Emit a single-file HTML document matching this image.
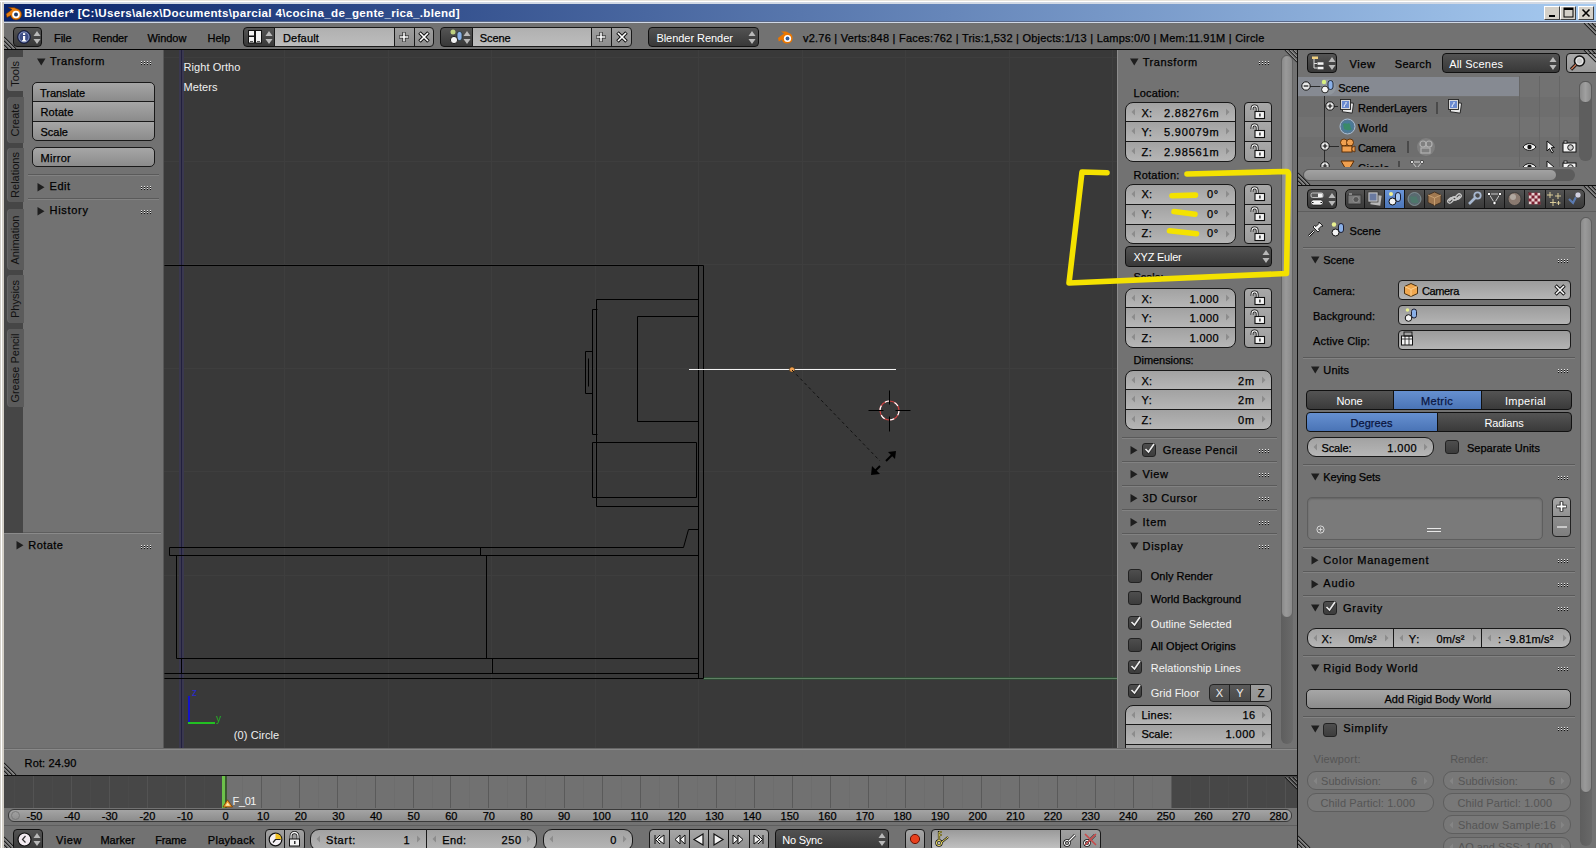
<!DOCTYPE html><html><head><meta charset="utf-8"><style>
html,body{margin:0;padding:0;}
body{width:1596px;height:848px;overflow:hidden;position:relative;background:#727272;font-family:"Liberation Sans",sans-serif;}
.a{position:absolute;box-sizing:border-box;}
.t{white-space:nowrap;}
.d{-webkit-text-stroke:0.25px currentColor;}
</style></head><body>

<div class="a " style="left:0px;top:0px;width:1596px;height:848px;background:#d4d0c8;"></div>
<div class="a " style="left:0px;top:0px;width:1596px;height:1px;background:#e8e4dc;"></div>
<div class="a " style="left:0px;top:1px;width:1596px;height:1px;background:#ffffff;"></div>
<div class="a " style="left:1px;top:1px;width:1px;height:847px;background:#ffffff;"></div>
<div class="a " style="left:4px;top:2px;width:1592px;height:2px;background:#d2d9e4;"></div>
<div class="a " style="left:4px;top:4px;width:1592px;height:18px;background:linear-gradient(to right,#0a246a 0%,#a6caf0 100%);"></div>
<div class="a t" style="left:24.00px;top:7.18px;font-size:11.6px;line-height:11.6px;color:#fff;letter-spacing:0.309px;font-weight:bold;">Blender* [C:\Users\alex\Documents\parcial 4\cocina_de_gente_rica_.blend]</div>
<svg class="a" style="left:5px;top:4px;" width="18" height="17" viewBox="0 0 18 17"><path d="M1 10 L7 5.5 L3.5 3.5 L9 3.5 L12 4.8 C15.5 5.8 17 9 16.5 11.5 C16 14.5 13 16.3 10 15.8 C7.2 15.3 5.8 13.2 5.8 11.5 L2 13.5 Z" fill="#e87d0d" stroke="#6a3000" stroke-width="0.6"/><circle cx="11" cy="10.5" r="3.8" fill="#fff"/><circle cx="11" cy="10.5" r="2" fill="#1f3c6a"/></svg>
<div class="a " style="left:1544px;top:6px;width:16px;height:14px;background:#d4d0c8;border-top:1px solid #fff;border-left:1px solid #fff;border-right:1px solid #404040;border-bottom:1px solid #404040;"></div>
<div class="a " style="left:1560px;top:6px;width:16px;height:14px;background:#d4d0c8;border-top:1px solid #fff;border-left:1px solid #fff;border-right:1px solid #404040;border-bottom:1px solid #404040;"></div>
<div class="a " style="left:1578px;top:6px;width:16px;height:14px;background:#d4d0c8;border-top:1px solid #fff;border-left:1px solid #fff;border-right:1px solid #404040;border-bottom:1px solid #404040;"></div>
<svg class="a" style="left:1544px;top:6px;" width="52" height="14" viewBox="0 0 52 14"><rect x="5" y="9" width="6" height="2" fill="#000"/><rect x="20" y="2" width="9" height="9" fill="none" stroke="#000" stroke-width="1"/><rect x="20" y="2" width="9" height="2" fill="#000"/><path d="M38.5 3.5 L45.5 10.5 M45.5 3.5 L38.5 10.5" stroke="#000" stroke-width="1.6"/></svg>
<div class="a " style="left:4px;top:22px;width:1592px;height:826px;background:#727272;"></div>
<div class="a " style="left:4px;top:21px;width:1592px;height:1px;background:#5a6a8c;"></div>
<div class="a " style="left:4px;top:22px;width:1592px;height:1px;background:#d0d8e6;"></div>
<div class="a " style="left:4px;top:23px;width:1592px;height:26px;background:#727272;"></div>
<div class="a " style="left:4px;top:49px;width:1592px;height:1px;background:#000;"></div>
<div class="a " style="left:13px;top:27px;width:29px;height:20px;background:linear-gradient(#545454,#383838);border:1px solid #111;border-radius:4px 4px 4px 4px;"></div>
<svg class="a" style="left:17px;top:30px;" width="14" height="14" viewBox="0 0 14 14"><circle cx="7" cy="7" r="6.3" fill="#3d4e86" stroke="#0d1330" stroke-width="1"/><circle cx="7" cy="7" r="5" fill="none" stroke="#9aa6cf" stroke-width="0.8"/><rect x="6" y="6" width="2.2" height="5" fill="#fff"/><rect x="5" y="10.2" width="4.2" height="1.2" fill="#fff"/><rect x="6" y="3.2" width="2.2" height="1.8" fill="#fff"/></svg>
<svg class="a" style="left:33px;top:30px;" width="8" height="15" viewBox="0 0 8 15"><path d="M4 1 L7.5 6 L0.5 6Z" fill="#b9b9b9"/><path d="M4 14 L7.5 9 L0.5 9Z" fill="#b9b9b9"/></svg>
<div class="a t d" style="left:54.00px;top:32.69px;font-size:11px;line-height:11px;color:#000;letter-spacing:-0.030px;">File</div>
<div class="a t d" style="left:92.50px;top:32.69px;font-size:11px;line-height:11px;color:#000;letter-spacing:-0.182px;">Render</div>
<div class="a t d" style="left:147.40px;top:32.69px;font-size:11px;line-height:11px;color:#000;letter-spacing:-0.021px;">Window</div>
<div class="a t d" style="left:207.50px;top:32.69px;font-size:11px;line-height:11px;color:#000;letter-spacing:-0.031px;">Help</div>
<div class="a " style="left:243px;top:27px;width:32px;height:20px;background:linear-gradient(#545454,#383838);border:1px solid #111;border-radius:4px 0px 0px 4px;"></div>
<svg class="a" style="left:248px;top:30px;" width="14" height="14" viewBox="0 0 14 14"><rect x="0.5" y="0.5" width="6" height="5.5" fill="#f0f0f0" stroke="#111"/><rect x="0.5" y="6.5" width="6" height="6.5" fill="#f0f0f0" stroke="#111"/><rect x="7.5" y="0.5" width="6" height="12.5" fill="#f0f0f0" stroke="#111"/><rect x="2" y="11" width="3" height="1" fill="#555"/><rect x="9" y="11" width="3" height="1" fill="#555"/></svg>
<svg class="a" style="left:265px;top:30px;" width="8" height="15" viewBox="0 0 8 15"><path d="M4 1 L7.5 6 L0.5 6Z" fill="#b9b9b9"/><path d="M4 14 L7.5 9 L0.5 9Z" fill="#b9b9b9"/></svg>
<div class="a " style="left:274px;top:27px;width:121px;height:20px;background:linear-gradient(#b0b0b0,#bdbdbd);border:1px solid #191919;border-radius:0px 0px 0px 0px;"></div>
<div class="a t d" style="left:283.00px;top:32.69px;font-size:11px;line-height:11px;color:#000;letter-spacing:0.161px;">Default</div>
<div class="a " style="left:394px;top:27px;width:21px;height:20px;background:linear-gradient(#9e9e9e,#8e8e8e);border:1px solid #191919;border-radius:0px 0px 0px 0px;"></div>
<div class="a " style="left:414px;top:27px;width:20px;height:20px;background:linear-gradient(#9e9e9e,#8e8e8e);border:1px solid #191919;border-radius:0px 4px 4px 0px;"></div>
<svg class="a" style="left:397.0px;top:30px;" width="14" height="14" viewBox="0 0 14 14"><path d="M7 2 V12 M2 7 H12" stroke="#222" stroke-width="3.2"/><path d="M7 2.6 V11.4 M2.6 7 H11.4" stroke="#fff" stroke-width="1.6"/></svg>
<svg class="a" style="left:417.0px;top:30px;" width="14" height="14" viewBox="0 0 14 14"><path d="M2.5 2.5 L11.5 11.5 M11.5 2.5 L2.5 11.5" stroke="#111" stroke-width="3.6"/><path d="M3 3 L11 11 M11 3 L3 11" stroke="#fff" stroke-width="1.7"/></svg>
<div class="a " style="left:440px;top:27px;width:33px;height:20px;background:linear-gradient(#545454,#383838);border:1px solid #111;border-radius:4px 0px 0px 4px;"></div>
<svg class="a" style="left:448px;top:29px;" width="18" height="16" viewBox="0 0 18 16"><circle cx="5" cy="3" r="2.5" fill="#d9f08c" opacity="0.8"/><rect x="9" y="2.5" width="5" height="9" rx="2.5" fill="#8ab0e8" stroke="#233" stroke-width="0.8"/><circle cx="6" cy="11" r="3.6" fill="#f2f2f2" stroke="#111" stroke-width="0.9"/></svg>
<svg class="a" style="left:463px;top:30px;" width="8" height="15" viewBox="0 0 8 15"><path d="M4 1 L7.5 6 L0.5 6Z" fill="#b9b9b9"/><path d="M4 14 L7.5 9 L0.5 9Z" fill="#b9b9b9"/></svg>
<div class="a " style="left:472px;top:27px;width:120px;height:20px;background:linear-gradient(#b0b0b0,#bdbdbd);border:1px solid #191919;border-radius:0px 0px 0px 0px;"></div>
<div class="a t d" style="left:479.70px;top:32.69px;font-size:11px;line-height:11px;color:#000;letter-spacing:-0.044px;">Scene</div>
<div class="a " style="left:591px;top:27px;width:21px;height:20px;background:linear-gradient(#9e9e9e,#8e8e8e);border:1px solid #191919;border-radius:0px 0px 0px 0px;"></div>
<div class="a " style="left:611px;top:27px;width:21px;height:20px;background:linear-gradient(#9e9e9e,#8e8e8e);border:1px solid #191919;border-radius:0px 4px 4px 0px;"></div>
<svg class="a" style="left:594.0px;top:30px;" width="14" height="14" viewBox="0 0 14 14"><path d="M7 2 V12 M2 7 H12" stroke="#222" stroke-width="3.2"/><path d="M7 2.6 V11.4 M2.6 7 H11.4" stroke="#fff" stroke-width="1.6"/></svg>
<svg class="a" style="left:614.5px;top:30px;" width="14" height="14" viewBox="0 0 14 14"><path d="M2.5 2.5 L11.5 11.5 M11.5 2.5 L2.5 11.5" stroke="#111" stroke-width="3.6"/><path d="M3 3 L11 11 M11 3 L3 11" stroke="#fff" stroke-width="1.7"/></svg>
<div class="a " style="left:648px;top:27px;width:111px;height:20px;background:linear-gradient(#525252,#383838);border:1px solid #111;border-radius:4px 4px 4px 4px;"></div>
<div class="a t" style="left:656.40px;top:32.69px;font-size:11px;line-height:11px;color:#fff;letter-spacing:-0.042px;">Blender Render</div>
<svg class="a" style="left:748px;top:30px;" width="8" height="15" viewBox="0 0 8 15"><path d="M4 1 L7.5 6 L0.5 6Z" fill="#b9b9b9"/><path d="M4 14 L7.5 9 L0.5 9Z" fill="#b9b9b9"/></svg>
<svg class="a" style="left:777px;top:29px;" width="17" height="16" viewBox="0 0 17 16"><path d="M1 9 L7 4.5 L4 2.5 L9 2.5 L12 4 C15 5 16 8 15.5 10.5 C15 13.5 12 15 9 14.5 C6.5 14 5 12 5 10.5 L1.8 12.5 Z" fill="#ea7600"/><circle cx="10.5" cy="9.5" r="3.6" fill="#fff"/><circle cx="10.5" cy="9.5" r="1.9" fill="#2f5a9a"/></svg>
<div class="a t d" style="left:803.00px;top:32.69px;font-size:11px;line-height:11px;color:#000;letter-spacing:0.233px;">v2.76 | Verts:848 | Faces:762 | Tris:1,532 | Objects:1/13 | Lamps:0/0 | Mem:11.91M | Circle</div>
<svg class="a" style="left:1583px;top:23px;" width="13" height="13" viewBox="0 0 13 13"><path d="M1 0 L13 12 M5 0 L13 8 M9 0 L13 4" stroke="#1e1e1e" stroke-width="1.1"/><path d="M2.3 0 L13 10.7 M6.3 0 L13 6.7 M10.3 0 L13 2.7" stroke="#a8a8a8" stroke-width="0.8"/></svg>
<svg class="a" style="left:4px;top:36px;" width="13" height="13" viewBox="0 0 13 13"><path d="M0 1 L12 13 M0 5 L8 13 M0 9 L4 13" stroke="#1e1e1e" stroke-width="1.1"/><path d="M0 2.3 L10.7 13 M0 6.3 L6.7 13 M0 10.3 L2.7 13" stroke="#a8a8a8" stroke-width="0.8"/></svg>
<div class="a " style="left:4px;top:50px;width:19px;height:483px;background:#464646;"></div>
<div class="a " style="left:23px;top:50px;width:141px;height:483px;background:#727272;"></div>
<div class="a " style="left:4px;top:533px;width:160px;height:216px;background:#727272;"></div>
<div class="a " style="left:23px;top:532px;width:138px;height:1px;background:#5e5e5e;"></div>
<div class="a " style="left:4px;top:533px;width:157px;height:1px;background:#8a8a8a;"></div>
<div class="a " style="left:7px;top:57px;width:17px;height:34px;background:#727272;border-radius:4px 0 0 4px;box-shadow:inset 1px 0 0 rgba(255,255,255,0.08);"></div>
<div class="a t" style="left:10.2px;top:74.0px;font-size:11px;line-height:11px;color:#111;transform-origin:0 0;transform:rotate(-90deg) translate(-12.8px,0);">Tools</div>
<div class="a " style="left:7px;top:97px;width:17px;height:46px;background:#5b5b5b;border-radius:4px 0 0 4px;box-shadow:inset 1px 0 0 rgba(255,255,255,0.08);"></div>
<div class="a t" style="left:10.2px;top:120.0px;font-size:11px;line-height:11px;color:#111;transform-origin:0 0;transform:rotate(-90deg) translate(-16.5px,0);">Create</div>
<div class="a " style="left:7px;top:148px;width:17px;height:54px;background:#5b5b5b;border-radius:4px 0 0 4px;box-shadow:inset 1px 0 0 rgba(255,255,255,0.08);"></div>
<div class="a t" style="left:10.2px;top:175.0px;font-size:11px;line-height:11px;color:#111;transform-origin:0 0;transform:rotate(-90deg) translate(-22.9px,0);">Relations</div>
<div class="a " style="left:7px;top:209px;width:17px;height:61px;background:#5b5b5b;border-radius:4px 0 0 4px;box-shadow:inset 1px 0 0 rgba(255,255,255,0.08);"></div>
<div class="a t" style="left:10.2px;top:239.5px;font-size:11px;line-height:11px;color:#111;transform-origin:0 0;transform:rotate(-90deg) translate(-24.5px,0);">Animation</div>
<div class="a " style="left:7px;top:275px;width:17px;height:48px;background:#5b5b5b;border-radius:4px 0 0 4px;box-shadow:inset 1px 0 0 rgba(255,255,255,0.08);"></div>
<div class="a t" style="left:10.2px;top:299.0px;font-size:11px;line-height:11px;color:#111;transform-origin:0 0;transform:rotate(-90deg) translate(-19.0px,0);">Physics</div>
<div class="a " style="left:7px;top:329px;width:17px;height:78px;background:#5b5b5b;border-radius:4px 0 0 4px;box-shadow:inset 1px 0 0 rgba(255,255,255,0.08);"></div>
<div class="a t" style="left:10.2px;top:368.0px;font-size:11px;line-height:11px;color:#111;transform-origin:0 0;transform:rotate(-90deg) translate(-34.6px,0);">Grease Pencil</div>
<svg class="a" style="left:37px;top:58px;" width="9" height="8" viewBox="0 0 9 8"><path d="M0 0.5 L8.5 0.5 L4.25 7.5Z" fill="#1e1e1e"/></svg>
<div class="a t d" style="left:49.90px;top:55.69px;font-size:11px;line-height:11px;color:#000;letter-spacing:0.587px;">Transform</div>
<svg class="a" style="left:141px;top:61px;" width="11" height="4" viewBox="0 0 11 4"><rect x="0" y="0" width="1" height="1" fill="#e6e6e6"/><rect x="0" y="1" width="1" height="1" fill="#111"/><rect x="0" y="2" width="1" height="1" fill="#e6e6e6"/><rect x="0" y="3" width="1" height="1" fill="#111"/><rect x="3" y="0" width="1" height="1" fill="#e6e6e6"/><rect x="3" y="1" width="1" height="1" fill="#111"/><rect x="3" y="2" width="1" height="1" fill="#e6e6e6"/><rect x="3" y="3" width="1" height="1" fill="#111"/><rect x="6" y="0" width="1" height="1" fill="#e6e6e6"/><rect x="6" y="1" width="1" height="1" fill="#111"/><rect x="6" y="2" width="1" height="1" fill="#e6e6e6"/><rect x="6" y="3" width="1" height="1" fill="#111"/><rect x="9" y="0" width="1" height="1" fill="#e6e6e6"/><rect x="9" y="1" width="1" height="1" fill="#111"/><rect x="9" y="2" width="1" height="1" fill="#e6e6e6"/><rect x="9" y="3" width="1" height="1" fill="#111"/></svg>
<div class="a " style="left:32px;top:82px;width:123px;height:20px;background:linear-gradient(#a6a6a6,#8b8b8b);border:1px solid #191919;border-radius:5px 5px 0px 0px;"></div>
<div class="a " style="left:32px;top:101px;width:123px;height:21px;background:linear-gradient(#a6a6a6,#8b8b8b);border:1px solid #191919;border-radius:0px 0px 0px 0px;"></div>
<div class="a " style="left:32px;top:121px;width:123px;height:20px;background:linear-gradient(#a6a6a6,#8b8b8b);border:1px solid #191919;border-radius:0px 0px 5px 5px;"></div>
<div class="a t d" style="left:40.10px;top:87.69px;font-size:11px;line-height:11px;color:#000;letter-spacing:-0.052px;">Translate</div>
<div class="a t d" style="left:40.50px;top:106.69px;font-size:11px;line-height:11px;color:#000;letter-spacing:0.094px;">Rotate</div>
<div class="a t d" style="left:40.50px;top:126.69px;font-size:11px;line-height:11px;color:#000;letter-spacing:-0.006px;">Scale</div>
<div class="a " style="left:32px;top:147px;width:123px;height:20px;background:linear-gradient(#a6a6a6,#8b8b8b);border:1px solid #191919;border-radius:5px 5px 5px 5px;"></div>
<div class="a t d" style="left:40.50px;top:152.69px;font-size:11px;line-height:11px;color:#000;letter-spacing:0.302px;">Mirror</div>
<div class="a " style="left:28px;top:174px;width:131px;height:1px;background:#5a5a5a;"></div>
<div class="a " style="left:28px;top:175px;width:131px;height:1px;background:#828282;"></div>
<svg class="a" style="left:37px;top:183px;" width="8" height="9" viewBox="0 0 8 9"><path d="M0.5 0 L7.5 4.25 L0.5 8.5Z" fill="#1e1e1e"/></svg>
<div class="a t d" style="left:49.60px;top:180.69px;font-size:11px;line-height:11px;color:#000;letter-spacing:0.508px;">Edit</div>
<svg class="a" style="left:141px;top:186px;" width="11" height="4" viewBox="0 0 11 4"><rect x="0" y="0" width="1" height="1" fill="#e6e6e6"/><rect x="0" y="1" width="1" height="1" fill="#111"/><rect x="0" y="2" width="1" height="1" fill="#e6e6e6"/><rect x="0" y="3" width="1" height="1" fill="#111"/><rect x="3" y="0" width="1" height="1" fill="#e6e6e6"/><rect x="3" y="1" width="1" height="1" fill="#111"/><rect x="3" y="2" width="1" height="1" fill="#e6e6e6"/><rect x="3" y="3" width="1" height="1" fill="#111"/><rect x="6" y="0" width="1" height="1" fill="#e6e6e6"/><rect x="6" y="1" width="1" height="1" fill="#111"/><rect x="6" y="2" width="1" height="1" fill="#e6e6e6"/><rect x="6" y="3" width="1" height="1" fill="#111"/><rect x="9" y="0" width="1" height="1" fill="#e6e6e6"/><rect x="9" y="1" width="1" height="1" fill="#111"/><rect x="9" y="2" width="1" height="1" fill="#e6e6e6"/><rect x="9" y="3" width="1" height="1" fill="#111"/></svg>
<div class="a " style="left:28px;top:198px;width:131px;height:1px;background:#5a5a5a;"></div>
<div class="a " style="left:28px;top:199px;width:131px;height:1px;background:#828282;"></div>
<svg class="a" style="left:37px;top:207px;" width="8" height="9" viewBox="0 0 8 9"><path d="M0.5 0 L7.5 4.25 L0.5 8.5Z" fill="#1e1e1e"/></svg>
<div class="a t d" style="left:49.60px;top:204.69px;font-size:11px;line-height:11px;color:#000;letter-spacing:0.683px;">History</div>
<svg class="a" style="left:141px;top:210px;" width="11" height="4" viewBox="0 0 11 4"><rect x="0" y="0" width="1" height="1" fill="#e6e6e6"/><rect x="0" y="1" width="1" height="1" fill="#111"/><rect x="0" y="2" width="1" height="1" fill="#e6e6e6"/><rect x="0" y="3" width="1" height="1" fill="#111"/><rect x="3" y="0" width="1" height="1" fill="#e6e6e6"/><rect x="3" y="1" width="1" height="1" fill="#111"/><rect x="3" y="2" width="1" height="1" fill="#e6e6e6"/><rect x="3" y="3" width="1" height="1" fill="#111"/><rect x="6" y="0" width="1" height="1" fill="#e6e6e6"/><rect x="6" y="1" width="1" height="1" fill="#111"/><rect x="6" y="2" width="1" height="1" fill="#e6e6e6"/><rect x="6" y="3" width="1" height="1" fill="#111"/><rect x="9" y="0" width="1" height="1" fill="#e6e6e6"/><rect x="9" y="1" width="1" height="1" fill="#111"/><rect x="9" y="2" width="1" height="1" fill="#e6e6e6"/><rect x="9" y="3" width="1" height="1" fill="#111"/></svg>
<svg class="a" style="left:16px;top:541px;" width="8" height="9" viewBox="0 0 8 9"><path d="M0.5 0 L7.5 4.25 L0.5 8.5Z" fill="#1e1e1e"/></svg>
<div class="a t d" style="left:28.30px;top:539.69px;font-size:11px;line-height:11px;color:#000;letter-spacing:0.427px;">Rotate</div>
<svg class="a" style="left:141px;top:545px;" width="11" height="4" viewBox="0 0 11 4"><rect x="0" y="0" width="1" height="1" fill="#e6e6e6"/><rect x="0" y="1" width="1" height="1" fill="#111"/><rect x="0" y="2" width="1" height="1" fill="#e6e6e6"/><rect x="0" y="3" width="1" height="1" fill="#111"/><rect x="3" y="0" width="1" height="1" fill="#e6e6e6"/><rect x="3" y="1" width="1" height="1" fill="#111"/><rect x="3" y="2" width="1" height="1" fill="#e6e6e6"/><rect x="3" y="3" width="1" height="1" fill="#111"/><rect x="6" y="0" width="1" height="1" fill="#e6e6e6"/><rect x="6" y="1" width="1" height="1" fill="#111"/><rect x="6" y="2" width="1" height="1" fill="#e6e6e6"/><rect x="6" y="3" width="1" height="1" fill="#111"/><rect x="9" y="0" width="1" height="1" fill="#e6e6e6"/><rect x="9" y="1" width="1" height="1" fill="#111"/><rect x="9" y="2" width="1" height="1" fill="#e6e6e6"/><rect x="9" y="3" width="1" height="1" fill="#111"/></svg>
<div class="a " style="left:164px;top:50px;width:953px;height:699px;background:#393939;"></div>
<div class="a " style="left:163px;top:50px;width:1px;height:699px;background:#585858;"></div>
<svg class="a" style="left:164px;top:50px;" width="953" height="699" viewBox="0 0 953 699"><rect x="120" y="0" width="1" height="699" fill="#3e3e3e"/><rect x="224" y="0" width="1" height="699" fill="#3e3e3e"/><rect x="327" y="0" width="1" height="699" fill="#3e3e3e"/><rect x="431" y="0" width="1" height="699" fill="#3e3e3e"/><rect x="534" y="0" width="1" height="699" fill="#3e3e3e"/><rect x="638" y="0" width="1" height="699" fill="#3e3e3e"/><rect x="741" y="0" width="1" height="699" fill="#3e3e3e"/><rect x="845" y="0" width="1" height="699" fill="#3e3e3e"/><rect x="948" y="0" width="1" height="699" fill="#3e3e3e"/><rect x="0" y="525" width="953" height="1" fill="#3e3e3e"/><rect x="0" y="421" width="953" height="1" fill="#3e3e3e"/><rect x="0" y="318" width="953" height="1" fill="#3e3e3e"/><rect x="0" y="214" width="953" height="1" fill="#3e3e3e"/><rect x="0" y="111" width="953" height="1" fill="#3e3e3e"/><rect x="0" y="7" width="953" height="1" fill="#3e3e3e"/><rect x="15" y="0" width="5" height="699" fill="#3a384f"/><rect x="17" y="0" width="1" height="699" fill="#211f3d"/><rect x="539" y="627" width="953" height="3" fill="#2f4a35"/><rect x="539" y="628" width="953" height="1" fill="#5f7f63"/><path d="M0.5 215.5 L539.5 215.5" fill="none" stroke="#000" stroke-width="1"/><path d="M534.5 215.5 L534.5 628.5" fill="none" stroke="#000" stroke-width="1"/><path d="M539.5 215.5 L539.5 628.5" fill="none" stroke="#000" stroke-width="1"/><path d="M534.5 249.5 L432.5 249.5 L432.5 456.5 L534.5 456.5" fill="none" stroke="#000" stroke-width="1"/><path d="M433.5 259.5 L428.5 259.5 L428.5 384.5 L433.5 384.5" fill="none" stroke="#000" stroke-width="1"/><path d="M428.5 301.5 L421.5 301.5 L421.5 343.5 L428.5 343.5" fill="none" stroke="#000" stroke-width="1"/><path d="M424.5 308.5 L424.5 336.5" fill="none" stroke="#000" stroke-width="1"/><path d="M534.5 266.5 L473.5 266.5 L473.5 371.5 L534.5 371.5" fill="none" stroke="#000" stroke-width="1"/><path d="M428.5 392.5 L532.5 392.5 L532.5 447.5 L428.5 447.5 L428.5 392.5" fill="none" stroke="#000" stroke-width="1"/><path d="M534.5 479.5 L524.5 479.5 L519.5 497.5 L5.5 497.5 L5.5 505.5 L534.5 505.5" fill="none" stroke="#000" stroke-width="1"/><path d="M316.5 497.5 L316.5 505.5" fill="none" stroke="#000" stroke-width="1"/><path d="M12.5 505.5 L12.5 608.5 L534.5 608.5" fill="none" stroke="#000" stroke-width="1"/><path d="M322.5 505.5 L322.5 608.5" fill="none" stroke="#000" stroke-width="1"/><path d="M17.5 608.5 L17.5 623.5" fill="none" stroke="#000" stroke-width="1"/><path d="M328.5 608.5 L328.5 623.5" fill="none" stroke="#000" stroke-width="1"/><path d="M0.5 623.5 L534.5 623.5" fill="none" stroke="#000" stroke-width="1"/><path d="M0.5 628.5 L539.5 628.5" fill="none" stroke="#000" stroke-width="1"/><rect x="525" y="319" width="207" height="1" fill="#f4f4f4"/><circle cx="628" cy="319.5" r="2.6" fill="#f0a050" stroke="#3a2a10" stroke-width="0.6"/><path d="M628 320 L716 411" stroke="#111" stroke-width="1" stroke-dasharray="3,3"/><circle cx="725.5" cy="360.5" r="9.5" fill="none" stroke="#c84040" stroke-width="1.2"/><circle cx="725.5" cy="360.5" r="9.5" fill="none" stroke="#ffffff" stroke-width="1.2" stroke-dasharray="4.97,4.97"/><path d="M704.5 360.5 H719.5 M731.5 360.5 H746.5 M725.5 340.5 V354.5 M725.5 366.5 V381.5" stroke="#000" stroke-width="1"/><path d="M722 411 L729 404" stroke="#000" stroke-width="2"/><path d="M732 401 L724 402 L731 409Z" fill="#000"/><path d="M716 416 L710 422" stroke="#000" stroke-width="2"/><path d="M707 425 L708 416 L716 424Z" fill="#000"/><rect x="24" y="646" width="2" height="27" fill="#1414c8"/><rect x="24" y="672" width="27" height="2" fill="#22c022"/></svg>
<div class="a t" style="left:183.50px;top:61.69px;font-size:11px;line-height:11px;color:#f0f0f0;letter-spacing:0.065px;">Right Ortho</div>
<div class="a t" style="left:183.50px;top:81.69px;font-size:11px;line-height:11px;color:#f0f0f0;letter-spacing:0.062px;">Meters</div>
<div class="a t" style="left:233.80px;top:729.69px;font-size:11px;line-height:11px;color:#f0f0f0;letter-spacing:0.091px;">(0) Circle</div>
<div class="a t" style="left:192.00px;top:687.53px;font-size:10px;line-height:10px;color:#2a2ad0;">z</div>
<div class="a t" style="left:216.00px;top:713.53px;font-size:10px;line-height:10px;color:#22b022;">y</div>
<div class="a " style="left:1117px;top:50px;width:180px;height:699px;background:#727272;"></div>
<div class="a " style="left:1117px;top:50px;width:1px;height:699px;background:#8c8c8c;"></div>
<div class="a " style="left:1281px;top:55px;width:12px;height:689px;background:linear-gradient(to right,#5e5e5e,#6a6a6a);border-radius:6px;"></div>
<div class="a " style="left:1281px;top:55px;width:12px;height:563px;background:linear-gradient(to right,#8a8a8a,#9a9a9a 40%,#8a8a8a);border-radius:6px;border:1px solid #626262;"></div>
<svg class="a" style="left:1283px;top:50px;" width="14" height="14" viewBox="0 0 14 14"><path d="M2 0 L14 12 M6 0 L14 8 M10 0 L14 4" stroke="#2a2a2a" stroke-width="1.2"/><path d="M3 0 L14 11 M7 0 L14 7 M11 0 L14 3" stroke="#9a9a9a" stroke-width="0.8"/></svg>
<svg class="a" style="left:1129.5px;top:58px;" width="9" height="8" viewBox="0 0 9 8"><path d="M0 0.5 L8.5 0.5 L4.25 7.5Z" fill="#1e1e1e"/></svg>
<div class="a t d" style="left:1142.70px;top:56.69px;font-size:11px;line-height:11px;color:#000;letter-spacing:0.587px;">Transform</div>
<svg class="a" style="left:1259px;top:61px;" width="11" height="4" viewBox="0 0 11 4"><rect x="0" y="0" width="1" height="1" fill="#e6e6e6"/><rect x="0" y="1" width="1" height="1" fill="#111"/><rect x="0" y="2" width="1" height="1" fill="#e6e6e6"/><rect x="0" y="3" width="1" height="1" fill="#111"/><rect x="3" y="0" width="1" height="1" fill="#e6e6e6"/><rect x="3" y="1" width="1" height="1" fill="#111"/><rect x="3" y="2" width="1" height="1" fill="#e6e6e6"/><rect x="3" y="3" width="1" height="1" fill="#111"/><rect x="6" y="0" width="1" height="1" fill="#e6e6e6"/><rect x="6" y="1" width="1" height="1" fill="#111"/><rect x="6" y="2" width="1" height="1" fill="#e6e6e6"/><rect x="6" y="3" width="1" height="1" fill="#111"/><rect x="9" y="0" width="1" height="1" fill="#e6e6e6"/><rect x="9" y="1" width="1" height="1" fill="#111"/><rect x="9" y="2" width="1" height="1" fill="#e6e6e6"/><rect x="9" y="3" width="1" height="1" fill="#111"/></svg>
<div class="a t d" style="left:1133.50px;top:87.69px;font-size:11px;line-height:11px;color:#000;letter-spacing:0.146px;">Location:</div>
<div class="a " style="left:1125px;top:102px;width:111px;height:20px;background:linear-gradient(#a2a2a2,#b6b6b6);border:1px solid #191919;border-radius:8px 8px 0px 0px;"></div>
<svg class="a" style="left:1131px;top:107.5px;" width="5" height="8" viewBox="0 0 5 8"><path d="M4 0.5 L0.5 4 L4 7.5Z" fill="#8c8c8c"/></svg>
<svg class="a" style="left:1225px;top:107.5px;" width="5" height="8" viewBox="0 0 5 8"><path d="M1 0.5 L4.5 4 L1 7.5Z" fill="#8c8c8c"/></svg>
<div class="a " style="left:1125px;top:121px;width:111px;height:21px;background:linear-gradient(#a2a2a2,#b6b6b6);border:1px solid #191919;border-radius:0px 0px 0px 0px;"></div>
<svg class="a" style="left:1131px;top:127.0px;" width="5" height="8" viewBox="0 0 5 8"><path d="M4 0.5 L0.5 4 L4 7.5Z" fill="#8c8c8c"/></svg>
<svg class="a" style="left:1225px;top:127.0px;" width="5" height="8" viewBox="0 0 5 8"><path d="M1 0.5 L4.5 4 L1 7.5Z" fill="#8c8c8c"/></svg>
<div class="a " style="left:1125px;top:141px;width:111px;height:21px;background:linear-gradient(#a2a2a2,#b6b6b6);border:1px solid #191919;border-radius:0px 0px 8px 8px;"></div>
<svg class="a" style="left:1131px;top:147.0px;" width="5" height="8" viewBox="0 0 5 8"><path d="M4 0.5 L0.5 4 L4 7.5Z" fill="#8c8c8c"/></svg>
<svg class="a" style="left:1225px;top:147.0px;" width="5" height="8" viewBox="0 0 5 8"><path d="M1 0.5 L4.5 4 L1 7.5Z" fill="#8c8c8c"/></svg>
<div class="a " style="left:1244px;top:102px;width:28px;height:20px;background:linear-gradient(#a8a8a8,#9c9c9c);border:1px solid #191919;border-radius:4px 4px 0px 0px;"></div>
<svg class="a" style="left:1244px;top:102px;" width="28" height="20" viewBox="0 0 28 20"><path d="M8 8 V6.5 A2.6 2.6 0 0 1 13.2 6.5 V10" stroke="#111" stroke-width="2.8" fill="none"/><path d="M8 8 V6.5 A2.6 2.6 0 0 1 13.2 6.5 V10" stroke="#f4f4f4" stroke-width="1.1" fill="none"/><rect x="11" y="9.5" width="9.5" height="7" fill="#f4f4f4" stroke="#111" stroke-width="1.1"/><rect x="15.2" y="11.5" width="1.4" height="3" fill="#222"/></svg>
<div class="a " style="left:1244px;top:121px;width:28px;height:21px;background:linear-gradient(#a8a8a8,#9c9c9c);border:1px solid #191919;border-radius:0px 0px 0px 0px;"></div>
<svg class="a" style="left:1244px;top:121px;" width="28" height="20" viewBox="0 0 28 20"><path d="M8 8 V6.5 A2.6 2.6 0 0 1 13.2 6.5 V10" stroke="#111" stroke-width="2.8" fill="none"/><path d="M8 8 V6.5 A2.6 2.6 0 0 1 13.2 6.5 V10" stroke="#f4f4f4" stroke-width="1.1" fill="none"/><rect x="11" y="9.5" width="9.5" height="7" fill="#f4f4f4" stroke="#111" stroke-width="1.1"/><rect x="15.2" y="11.5" width="1.4" height="3" fill="#222"/></svg>
<div class="a " style="left:1244px;top:141px;width:28px;height:21px;background:linear-gradient(#a8a8a8,#9c9c9c);border:1px solid #191919;border-radius:0px 0px 4px 4px;"></div>
<svg class="a" style="left:1244px;top:141px;" width="28" height="20" viewBox="0 0 28 20"><path d="M8 8 V6.5 A2.6 2.6 0 0 1 13.2 6.5 V10" stroke="#111" stroke-width="2.8" fill="none"/><path d="M8 8 V6.5 A2.6 2.6 0 0 1 13.2 6.5 V10" stroke="#f4f4f4" stroke-width="1.1" fill="none"/><rect x="11" y="9.5" width="9.5" height="7" fill="#f4f4f4" stroke="#111" stroke-width="1.1"/><rect x="15.2" y="11.5" width="1.4" height="3" fill="#222"/></svg>
<div class="a t d" style="left:1141.40px;top:107.69px;font-size:11px;line-height:11px;color:#000;letter-spacing:0.297px;">X:</div>
<div class="a t d" style="left:1164.00px;top:107.69px;font-size:11px;line-height:11px;color:#000;letter-spacing:0.804px;">2.88276m</div>
<div class="a t d" style="left:1141.40px;top:126.69px;font-size:11px;line-height:11px;color:#000;letter-spacing:0.602px;">Y:</div>
<div class="a t d" style="left:1164.00px;top:126.69px;font-size:11px;line-height:11px;color:#000;letter-spacing:0.804px;">5.90079m</div>
<div class="a t d" style="left:1141.40px;top:146.69px;font-size:11px;line-height:11px;color:#000;letter-spacing:0.609px;">Z:</div>
<div class="a t d" style="left:1164.00px;top:146.69px;font-size:11px;line-height:11px;color:#000;letter-spacing:0.804px;">2.98561m</div>
<div class="a t d" style="left:1133.60px;top:169.69px;font-size:11px;line-height:11px;color:#000;letter-spacing:0.215px;">Rotation:</div>
<div class="a " style="left:1125px;top:184px;width:111px;height:21px;background:linear-gradient(#a2a2a2,#b6b6b6);border:1px solid #191919;border-radius:8px 8px 0px 0px;"></div>
<svg class="a" style="left:1131px;top:190.0px;" width="5" height="8" viewBox="0 0 5 8"><path d="M4 0.5 L0.5 4 L4 7.5Z" fill="#8c8c8c"/></svg>
<svg class="a" style="left:1225px;top:190.0px;" width="5" height="8" viewBox="0 0 5 8"><path d="M1 0.5 L4.5 4 L1 7.5Z" fill="#8c8c8c"/></svg>
<div class="a " style="left:1125px;top:204px;width:111px;height:21px;background:linear-gradient(#a2a2a2,#b6b6b6);border:1px solid #191919;border-radius:0px 0px 0px 0px;"></div>
<svg class="a" style="left:1131px;top:210.0px;" width="5" height="8" viewBox="0 0 5 8"><path d="M4 0.5 L0.5 4 L4 7.5Z" fill="#8c8c8c"/></svg>
<svg class="a" style="left:1225px;top:210.0px;" width="5" height="8" viewBox="0 0 5 8"><path d="M1 0.5 L4.5 4 L1 7.5Z" fill="#8c8c8c"/></svg>
<div class="a " style="left:1125px;top:224px;width:111px;height:20px;background:linear-gradient(#a2a2a2,#b6b6b6);border:1px solid #191919;border-radius:0px 0px 8px 8px;"></div>
<svg class="a" style="left:1131px;top:229.5px;" width="5" height="8" viewBox="0 0 5 8"><path d="M4 0.5 L0.5 4 L4 7.5Z" fill="#8c8c8c"/></svg>
<svg class="a" style="left:1225px;top:229.5px;" width="5" height="8" viewBox="0 0 5 8"><path d="M1 0.5 L4.5 4 L1 7.5Z" fill="#8c8c8c"/></svg>
<div class="a " style="left:1244px;top:184px;width:28px;height:21px;background:linear-gradient(#a8a8a8,#9c9c9c);border:1px solid #191919;border-radius:4px 4px 0px 0px;"></div>
<svg class="a" style="left:1244px;top:184px;" width="28" height="20" viewBox="0 0 28 20"><path d="M8 8 V6.5 A2.6 2.6 0 0 1 13.2 6.5 V10" stroke="#111" stroke-width="2.8" fill="none"/><path d="M8 8 V6.5 A2.6 2.6 0 0 1 13.2 6.5 V10" stroke="#f4f4f4" stroke-width="1.1" fill="none"/><rect x="11" y="9.5" width="9.5" height="7" fill="#f4f4f4" stroke="#111" stroke-width="1.1"/><rect x="15.2" y="11.5" width="1.4" height="3" fill="#222"/></svg>
<div class="a " style="left:1244px;top:204px;width:28px;height:21px;background:linear-gradient(#a8a8a8,#9c9c9c);border:1px solid #191919;border-radius:0px 0px 0px 0px;"></div>
<svg class="a" style="left:1244px;top:204px;" width="28" height="20" viewBox="0 0 28 20"><path d="M8 8 V6.5 A2.6 2.6 0 0 1 13.2 6.5 V10" stroke="#111" stroke-width="2.8" fill="none"/><path d="M8 8 V6.5 A2.6 2.6 0 0 1 13.2 6.5 V10" stroke="#f4f4f4" stroke-width="1.1" fill="none"/><rect x="11" y="9.5" width="9.5" height="7" fill="#f4f4f4" stroke="#111" stroke-width="1.1"/><rect x="15.2" y="11.5" width="1.4" height="3" fill="#222"/></svg>
<div class="a " style="left:1244px;top:224px;width:28px;height:20px;background:linear-gradient(#a8a8a8,#9c9c9c);border:1px solid #191919;border-radius:0px 0px 4px 4px;"></div>
<svg class="a" style="left:1244px;top:224px;" width="28" height="20" viewBox="0 0 28 20"><path d="M8 8 V6.5 A2.6 2.6 0 0 1 13.2 6.5 V10" stroke="#111" stroke-width="2.8" fill="none"/><path d="M8 8 V6.5 A2.6 2.6 0 0 1 13.2 6.5 V10" stroke="#f4f4f4" stroke-width="1.1" fill="none"/><rect x="11" y="9.5" width="9.5" height="7" fill="#f4f4f4" stroke="#111" stroke-width="1.1"/><rect x="15.2" y="11.5" width="1.4" height="3" fill="#222"/></svg>
<div class="a t d" style="left:1141.40px;top:188.69px;font-size:11px;line-height:11px;color:#000;letter-spacing:0.297px;">X:</div>
<div class="a t d" style="left:1207.00px;top:188.69px;font-size:11px;line-height:11px;color:#000;letter-spacing:0.734px;">0°</div>
<div class="a t d" style="left:1141.40px;top:208.69px;font-size:11px;line-height:11px;color:#000;letter-spacing:0.602px;">Y:</div>
<div class="a t d" style="left:1207.00px;top:208.69px;font-size:11px;line-height:11px;color:#000;letter-spacing:0.734px;">0°</div>
<div class="a t d" style="left:1141.40px;top:227.69px;font-size:11px;line-height:11px;color:#000;letter-spacing:0.609px;">Z:</div>
<div class="a t d" style="left:1207.00px;top:227.69px;font-size:11px;line-height:11px;color:#000;letter-spacing:0.734px;">0°</div>
<div class="a " style="left:1125px;top:246px;width:147px;height:21px;background:linear-gradient(#525252,#383838);border:1px solid #111;border-radius:4px 4px 4px 4px;"></div>
<div class="a t" style="left:1133.50px;top:251.69px;font-size:11px;line-height:11px;color:#fff;letter-spacing:-0.240px;">XYZ Euler</div>
<svg class="a" style="left:1262px;top:249px;" width="8" height="15" viewBox="0 0 8 15"><path d="M4 1 L7.5 6 L0.5 6Z" fill="#b9b9b9"/><path d="M4 14 L7.5 9 L0.5 9Z" fill="#b9b9b9"/></svg>
<div class="a t d" style="left:1133.60px;top:271.69px;font-size:11px;line-height:11px;color:#000;letter-spacing:-0.099px;">Scale:</div>
<div class="a " style="left:1125px;top:288px;width:111px;height:20px;background:linear-gradient(#a2a2a2,#b6b6b6);border:1px solid #191919;border-radius:8px 8px 0px 0px;"></div>
<svg class="a" style="left:1131px;top:293.5px;" width="5" height="8" viewBox="0 0 5 8"><path d="M4 0.5 L0.5 4 L4 7.5Z" fill="#8c8c8c"/></svg>
<svg class="a" style="left:1225px;top:293.5px;" width="5" height="8" viewBox="0 0 5 8"><path d="M1 0.5 L4.5 4 L1 7.5Z" fill="#8c8c8c"/></svg>
<div class="a " style="left:1125px;top:307px;width:111px;height:21px;background:linear-gradient(#a2a2a2,#b6b6b6);border:1px solid #191919;border-radius:0px 0px 0px 0px;"></div>
<svg class="a" style="left:1131px;top:313.0px;" width="5" height="8" viewBox="0 0 5 8"><path d="M4 0.5 L0.5 4 L4 7.5Z" fill="#8c8c8c"/></svg>
<svg class="a" style="left:1225px;top:313.0px;" width="5" height="8" viewBox="0 0 5 8"><path d="M1 0.5 L4.5 4 L1 7.5Z" fill="#8c8c8c"/></svg>
<div class="a " style="left:1125px;top:327px;width:111px;height:21px;background:linear-gradient(#a2a2a2,#b6b6b6);border:1px solid #191919;border-radius:0px 0px 8px 8px;"></div>
<svg class="a" style="left:1131px;top:333.0px;" width="5" height="8" viewBox="0 0 5 8"><path d="M4 0.5 L0.5 4 L4 7.5Z" fill="#8c8c8c"/></svg>
<svg class="a" style="left:1225px;top:333.0px;" width="5" height="8" viewBox="0 0 5 8"><path d="M1 0.5 L4.5 4 L1 7.5Z" fill="#8c8c8c"/></svg>
<div class="a " style="left:1244px;top:288px;width:28px;height:20px;background:linear-gradient(#a8a8a8,#9c9c9c);border:1px solid #191919;border-radius:4px 4px 0px 0px;"></div>
<svg class="a" style="left:1244px;top:288px;" width="28" height="20" viewBox="0 0 28 20"><path d="M8 8 V6.5 A2.6 2.6 0 0 1 13.2 6.5 V10" stroke="#111" stroke-width="2.8" fill="none"/><path d="M8 8 V6.5 A2.6 2.6 0 0 1 13.2 6.5 V10" stroke="#f4f4f4" stroke-width="1.1" fill="none"/><rect x="11" y="9.5" width="9.5" height="7" fill="#f4f4f4" stroke="#111" stroke-width="1.1"/><rect x="15.2" y="11.5" width="1.4" height="3" fill="#222"/></svg>
<div class="a " style="left:1244px;top:307px;width:28px;height:21px;background:linear-gradient(#a8a8a8,#9c9c9c);border:1px solid #191919;border-radius:0px 0px 0px 0px;"></div>
<svg class="a" style="left:1244px;top:307px;" width="28" height="20" viewBox="0 0 28 20"><path d="M8 8 V6.5 A2.6 2.6 0 0 1 13.2 6.5 V10" stroke="#111" stroke-width="2.8" fill="none"/><path d="M8 8 V6.5 A2.6 2.6 0 0 1 13.2 6.5 V10" stroke="#f4f4f4" stroke-width="1.1" fill="none"/><rect x="11" y="9.5" width="9.5" height="7" fill="#f4f4f4" stroke="#111" stroke-width="1.1"/><rect x="15.2" y="11.5" width="1.4" height="3" fill="#222"/></svg>
<div class="a " style="left:1244px;top:327px;width:28px;height:21px;background:linear-gradient(#a8a8a8,#9c9c9c);border:1px solid #191919;border-radius:0px 0px 4px 4px;"></div>
<svg class="a" style="left:1244px;top:327px;" width="28" height="20" viewBox="0 0 28 20"><path d="M8 8 V6.5 A2.6 2.6 0 0 1 13.2 6.5 V10" stroke="#111" stroke-width="2.8" fill="none"/><path d="M8 8 V6.5 A2.6 2.6 0 0 1 13.2 6.5 V10" stroke="#f4f4f4" stroke-width="1.1" fill="none"/><rect x="11" y="9.5" width="9.5" height="7" fill="#f4f4f4" stroke="#111" stroke-width="1.1"/><rect x="15.2" y="11.5" width="1.4" height="3" fill="#222"/></svg>
<div class="a t d" style="left:1141.40px;top:293.69px;font-size:11px;line-height:11px;color:#000;letter-spacing:0.297px;">X:</div>
<div class="a t d" style="left:1189.50px;top:293.69px;font-size:11px;line-height:11px;color:#000;letter-spacing:0.388px;">1.000</div>
<div class="a t d" style="left:1141.40px;top:312.69px;font-size:11px;line-height:11px;color:#000;letter-spacing:0.602px;">Y:</div>
<div class="a t d" style="left:1189.50px;top:312.69px;font-size:11px;line-height:11px;color:#000;letter-spacing:0.388px;">1.000</div>
<div class="a t d" style="left:1141.40px;top:332.69px;font-size:11px;line-height:11px;color:#000;letter-spacing:0.609px;">Z:</div>
<div class="a t d" style="left:1189.50px;top:332.69px;font-size:11px;line-height:11px;color:#000;letter-spacing:0.388px;">1.000</div>
<div class="a t d" style="left:1133.60px;top:354.69px;font-size:11px;line-height:11px;color:#000;letter-spacing:-0.048px;">Dimensions:</div>
<div class="a " style="left:1125px;top:370px;width:147px;height:20px;background:linear-gradient(#a2a2a2,#b6b6b6);border:1px solid #191919;border-radius:8px 8px 0px 0px;"></div>
<svg class="a" style="left:1131px;top:375.5px;" width="5" height="8" viewBox="0 0 5 8"><path d="M4 0.5 L0.5 4 L4 7.5Z" fill="#8c8c8c"/></svg>
<svg class="a" style="left:1261px;top:375.5px;" width="5" height="8" viewBox="0 0 5 8"><path d="M1 0.5 L4.5 4 L1 7.5Z" fill="#8c8c8c"/></svg>
<div class="a " style="left:1125px;top:389px;width:147px;height:21px;background:linear-gradient(#a2a2a2,#b6b6b6);border:1px solid #191919;border-radius:0px 0px 0px 0px;"></div>
<svg class="a" style="left:1131px;top:395.0px;" width="5" height="8" viewBox="0 0 5 8"><path d="M4 0.5 L0.5 4 L4 7.5Z" fill="#8c8c8c"/></svg>
<svg class="a" style="left:1261px;top:395.0px;" width="5" height="8" viewBox="0 0 5 8"><path d="M1 0.5 L4.5 4 L1 7.5Z" fill="#8c8c8c"/></svg>
<div class="a " style="left:1125px;top:409px;width:147px;height:21px;background:linear-gradient(#a2a2a2,#b6b6b6);border:1px solid #191919;border-radius:0px 0px 8px 8px;"></div>
<svg class="a" style="left:1131px;top:415.0px;" width="5" height="8" viewBox="0 0 5 8"><path d="M4 0.5 L0.5 4 L4 7.5Z" fill="#8c8c8c"/></svg>
<svg class="a" style="left:1261px;top:415.0px;" width="5" height="8" viewBox="0 0 5 8"><path d="M1 0.5 L4.5 4 L1 7.5Z" fill="#8c8c8c"/></svg>
<div class="a t d" style="left:1141.40px;top:375.69px;font-size:11px;line-height:11px;color:#000;letter-spacing:0.297px;">X:</div>
<div class="a t d" style="left:1237.90px;top:375.69px;font-size:11px;line-height:11px;color:#000;letter-spacing:1.109px;">2m</div>
<div class="a t d" style="left:1141.40px;top:394.69px;font-size:11px;line-height:11px;color:#000;letter-spacing:0.602px;">Y:</div>
<div class="a t d" style="left:1237.90px;top:394.69px;font-size:11px;line-height:11px;color:#000;letter-spacing:1.109px;">2m</div>
<div class="a t d" style="left:1141.40px;top:414.69px;font-size:11px;line-height:11px;color:#000;letter-spacing:0.609px;">Z:</div>
<div class="a t d" style="left:1237.90px;top:414.69px;font-size:11px;line-height:11px;color:#000;letter-spacing:1.109px;">0m</div>
<div class="a " style="left:1122px;top:437px;width:155px;height:1px;background:#5a5a5a;"></div>
<div class="a " style="left:1122px;top:438px;width:155px;height:1px;background:#828282;"></div>
<svg class="a" style="left:1130px;top:446px;" width="8" height="9" viewBox="0 0 8 9"><path d="M0.5 0 L7.5 4.25 L0.5 8.5Z" fill="#1e1e1e"/></svg>
<div class="a " style="left:1142px;top:443px;width:14px;height:14px;background:linear-gradient(#4e4e4e,#3c3c3c);border:1px solid #222;border-radius:3px;"></div>
<svg class="a" style="left:1142px;top:441px;" width="16" height="16" viewBox="0 0 16 16"><path d="M3.5 8.5 L6.5 11.5 L12 3.5" fill="none" stroke="#111" stroke-width="2.8" opacity="0.45"/><path d="M3.5 8 L6.5 11 L12 3" fill="none" stroke="#ececec" stroke-width="1.7"/></svg>
<div class="a t d" style="left:1162.70px;top:444.69px;font-size:11px;line-height:11px;color:#000;letter-spacing:0.452px;">Grease Pencil</div>
<svg class="a" style="left:1259px;top:449px;" width="11" height="4" viewBox="0 0 11 4"><rect x="0" y="0" width="1" height="1" fill="#e6e6e6"/><rect x="0" y="1" width="1" height="1" fill="#111"/><rect x="0" y="2" width="1" height="1" fill="#e6e6e6"/><rect x="0" y="3" width="1" height="1" fill="#111"/><rect x="3" y="0" width="1" height="1" fill="#e6e6e6"/><rect x="3" y="1" width="1" height="1" fill="#111"/><rect x="3" y="2" width="1" height="1" fill="#e6e6e6"/><rect x="3" y="3" width="1" height="1" fill="#111"/><rect x="6" y="0" width="1" height="1" fill="#e6e6e6"/><rect x="6" y="1" width="1" height="1" fill="#111"/><rect x="6" y="2" width="1" height="1" fill="#e6e6e6"/><rect x="6" y="3" width="1" height="1" fill="#111"/><rect x="9" y="0" width="1" height="1" fill="#e6e6e6"/><rect x="9" y="1" width="1" height="1" fill="#111"/><rect x="9" y="2" width="1" height="1" fill="#e6e6e6"/><rect x="9" y="3" width="1" height="1" fill="#111"/></svg>
<div class="a " style="left:1122px;top:461px;width:155px;height:1px;background:#5a5a5a;"></div>
<div class="a " style="left:1122px;top:462px;width:155px;height:1px;background:#828282;"></div>
<svg class="a" style="left:1130px;top:470px;" width="8" height="9" viewBox="0 0 8 9"><path d="M0.5 0 L7.5 4.25 L0.5 8.5Z" fill="#1e1e1e"/></svg>
<div class="a t d" style="left:1142.50px;top:468.69px;font-size:11px;line-height:11px;color:#000;letter-spacing:0.590px;">View</div>
<svg class="a" style="left:1259px;top:473px;" width="11" height="4" viewBox="0 0 11 4"><rect x="0" y="0" width="1" height="1" fill="#e6e6e6"/><rect x="0" y="1" width="1" height="1" fill="#111"/><rect x="0" y="2" width="1" height="1" fill="#e6e6e6"/><rect x="0" y="3" width="1" height="1" fill="#111"/><rect x="3" y="0" width="1" height="1" fill="#e6e6e6"/><rect x="3" y="1" width="1" height="1" fill="#111"/><rect x="3" y="2" width="1" height="1" fill="#e6e6e6"/><rect x="3" y="3" width="1" height="1" fill="#111"/><rect x="6" y="0" width="1" height="1" fill="#e6e6e6"/><rect x="6" y="1" width="1" height="1" fill="#111"/><rect x="6" y="2" width="1" height="1" fill="#e6e6e6"/><rect x="6" y="3" width="1" height="1" fill="#111"/><rect x="9" y="0" width="1" height="1" fill="#e6e6e6"/><rect x="9" y="1" width="1" height="1" fill="#111"/><rect x="9" y="2" width="1" height="1" fill="#e6e6e6"/><rect x="9" y="3" width="1" height="1" fill="#111"/></svg>
<div class="a " style="left:1122px;top:485px;width:155px;height:1px;background:#5a5a5a;"></div>
<div class="a " style="left:1122px;top:486px;width:155px;height:1px;background:#828282;"></div>
<svg class="a" style="left:1130px;top:494px;" width="8" height="9" viewBox="0 0 8 9"><path d="M0.5 0 L7.5 4.25 L0.5 8.5Z" fill="#1e1e1e"/></svg>
<div class="a t d" style="left:1142.50px;top:492.69px;font-size:11px;line-height:11px;color:#000;letter-spacing:0.542px;">3D Cursor</div>
<svg class="a" style="left:1259px;top:497px;" width="11" height="4" viewBox="0 0 11 4"><rect x="0" y="0" width="1" height="1" fill="#e6e6e6"/><rect x="0" y="1" width="1" height="1" fill="#111"/><rect x="0" y="2" width="1" height="1" fill="#e6e6e6"/><rect x="0" y="3" width="1" height="1" fill="#111"/><rect x="3" y="0" width="1" height="1" fill="#e6e6e6"/><rect x="3" y="1" width="1" height="1" fill="#111"/><rect x="3" y="2" width="1" height="1" fill="#e6e6e6"/><rect x="3" y="3" width="1" height="1" fill="#111"/><rect x="6" y="0" width="1" height="1" fill="#e6e6e6"/><rect x="6" y="1" width="1" height="1" fill="#111"/><rect x="6" y="2" width="1" height="1" fill="#e6e6e6"/><rect x="6" y="3" width="1" height="1" fill="#111"/><rect x="9" y="0" width="1" height="1" fill="#e6e6e6"/><rect x="9" y="1" width="1" height="1" fill="#111"/><rect x="9" y="2" width="1" height="1" fill="#e6e6e6"/><rect x="9" y="3" width="1" height="1" fill="#111"/></svg>
<div class="a " style="left:1122px;top:509px;width:155px;height:1px;background:#5a5a5a;"></div>
<div class="a " style="left:1122px;top:510px;width:155px;height:1px;background:#828282;"></div>
<svg class="a" style="left:1130px;top:518px;" width="8" height="9" viewBox="0 0 8 9"><path d="M0.5 0 L7.5 4.25 L0.5 8.5Z" fill="#1e1e1e"/></svg>
<div class="a t d" style="left:1142.50px;top:516.69px;font-size:11px;line-height:11px;color:#000;letter-spacing:0.773px;">Item</div>
<svg class="a" style="left:1259px;top:521px;" width="11" height="4" viewBox="0 0 11 4"><rect x="0" y="0" width="1" height="1" fill="#e6e6e6"/><rect x="0" y="1" width="1" height="1" fill="#111"/><rect x="0" y="2" width="1" height="1" fill="#e6e6e6"/><rect x="0" y="3" width="1" height="1" fill="#111"/><rect x="3" y="0" width="1" height="1" fill="#e6e6e6"/><rect x="3" y="1" width="1" height="1" fill="#111"/><rect x="3" y="2" width="1" height="1" fill="#e6e6e6"/><rect x="3" y="3" width="1" height="1" fill="#111"/><rect x="6" y="0" width="1" height="1" fill="#e6e6e6"/><rect x="6" y="1" width="1" height="1" fill="#111"/><rect x="6" y="2" width="1" height="1" fill="#e6e6e6"/><rect x="6" y="3" width="1" height="1" fill="#111"/><rect x="9" y="0" width="1" height="1" fill="#e6e6e6"/><rect x="9" y="1" width="1" height="1" fill="#111"/><rect x="9" y="2" width="1" height="1" fill="#e6e6e6"/><rect x="9" y="3" width="1" height="1" fill="#111"/></svg>
<div class="a " style="left:1122px;top:533px;width:155px;height:1px;background:#5a5a5a;"></div>
<div class="a " style="left:1122px;top:534px;width:155px;height:1px;background:#828282;"></div>
<svg class="a" style="left:1129.5px;top:542px;" width="9" height="8" viewBox="0 0 9 8"><path d="M0 0.5 L8.5 0.5 L4.25 7.5Z" fill="#1e1e1e"/></svg>
<div class="a t d" style="left:1142.50px;top:540.69px;font-size:11px;line-height:11px;color:#000;letter-spacing:0.705px;">Display</div>
<svg class="a" style="left:1259px;top:545px;" width="11" height="4" viewBox="0 0 11 4"><rect x="0" y="0" width="1" height="1" fill="#e6e6e6"/><rect x="0" y="1" width="1" height="1" fill="#111"/><rect x="0" y="2" width="1" height="1" fill="#e6e6e6"/><rect x="0" y="3" width="1" height="1" fill="#111"/><rect x="3" y="0" width="1" height="1" fill="#e6e6e6"/><rect x="3" y="1" width="1" height="1" fill="#111"/><rect x="3" y="2" width="1" height="1" fill="#e6e6e6"/><rect x="3" y="3" width="1" height="1" fill="#111"/><rect x="6" y="0" width="1" height="1" fill="#e6e6e6"/><rect x="6" y="1" width="1" height="1" fill="#111"/><rect x="6" y="2" width="1" height="1" fill="#e6e6e6"/><rect x="6" y="3" width="1" height="1" fill="#111"/><rect x="9" y="0" width="1" height="1" fill="#e6e6e6"/><rect x="9" y="1" width="1" height="1" fill="#111"/><rect x="9" y="2" width="1" height="1" fill="#e6e6e6"/><rect x="9" y="3" width="1" height="1" fill="#111"/></svg>
<div class="a " style="left:1128px;top:569px;width:14px;height:14px;background:linear-gradient(#4e4e4e,#3c3c3c);border:1px solid #222;border-radius:3px;"></div>
<div class="a t d" style="left:1150.80px;top:570.69px;font-size:11px;line-height:11px;color:#000;">Only Render</div>
<div class="a " style="left:1128px;top:591px;width:14px;height:14px;background:linear-gradient(#4e4e4e,#3c3c3c);border:1px solid #222;border-radius:3px;"></div>
<div class="a t d" style="left:1150.80px;top:593.69px;font-size:11px;line-height:11px;color:#000;">World Background</div>
<div class="a " style="left:1128px;top:616px;width:14px;height:14px;background:linear-gradient(#4e4e4e,#3c3c3c);border:1px solid #222;border-radius:3px;"></div>
<svg class="a" style="left:1128px;top:614px;" width="16" height="16" viewBox="0 0 16 16"><path d="M3.5 8.5 L6.5 11.5 L12 3.5" fill="none" stroke="#111" stroke-width="2.8" opacity="0.45"/><path d="M3.5 8 L6.5 11 L12 3" fill="none" stroke="#ececec" stroke-width="1.7"/></svg>
<div class="a t" style="left:1150.80px;top:618.69px;font-size:11px;line-height:11px;color:#f4f4f4;">Outline Selected</div>
<div class="a " style="left:1128px;top:638px;width:14px;height:14px;background:linear-gradient(#4e4e4e,#3c3c3c);border:1px solid #222;border-radius:3px;"></div>
<div class="a t d" style="left:1150.80px;top:640.69px;font-size:11px;line-height:11px;color:#000;">All Object Origins</div>
<div class="a " style="left:1128px;top:660px;width:14px;height:14px;background:linear-gradient(#4e4e4e,#3c3c3c);border:1px solid #222;border-radius:3px;"></div>
<svg class="a" style="left:1128px;top:658px;" width="16" height="16" viewBox="0 0 16 16"><path d="M3.5 8.5 L6.5 11.5 L12 3.5" fill="none" stroke="#111" stroke-width="2.8" opacity="0.45"/><path d="M3.5 8 L6.5 11 L12 3" fill="none" stroke="#ececec" stroke-width="1.7"/></svg>
<div class="a t" style="left:1150.80px;top:662.69px;font-size:11px;line-height:11px;color:#f4f4f4;">Relationship Lines</div>
<div class="a " style="left:1128px;top:684px;width:14px;height:14px;background:linear-gradient(#4e4e4e,#3c3c3c);border:1px solid #222;border-radius:3px;"></div>
<svg class="a" style="left:1128px;top:682px;" width="16" height="16" viewBox="0 0 16 16"><path d="M3.5 8.5 L6.5 11.5 L12 3.5" fill="none" stroke="#111" stroke-width="2.8" opacity="0.45"/><path d="M3.5 8 L6.5 11 L12 3" fill="none" stroke="#ececec" stroke-width="1.7"/></svg>
<div class="a t" style="left:1150.80px;top:687.69px;font-size:11px;line-height:11px;color:#f4f4f4;">Grid Floor</div>
<div class="a " style="left:1209px;top:684px;width:21px;height:18px;background:linear-gradient(#5a5a5a,#4a4a4a);border:1px solid #222;border-radius:4px 0px 0px 4px;"></div>
<div class="a " style="left:1229px;top:684px;width:22px;height:18px;background:linear-gradient(#5a5a5a,#4a4a4a);border:1px solid #222;border-radius:0px 0px 0px 0px;"></div>
<div class="a " style="left:1250px;top:684px;width:22px;height:18px;background:linear-gradient(#9c9c9c,#949494);border:1px solid #222;border-radius:0px 4px 4px 0px;"></div>
<div class="a t" style="left:1215.83px;top:687.69px;font-size:11px;line-height:11px;color:#f0f0f0;">X</div>
<div class="a t" style="left:1236.33px;top:687.69px;font-size:11px;line-height:11px;color:#f0f0f0;">Y</div>
<div class="a t d" style="left:1257.64px;top:687.69px;font-size:11px;line-height:11px;color:#000;">Z</div>
<div class="a " style="left:1125px;top:705px;width:147px;height:20px;background:linear-gradient(#a2a2a2,#b6b6b6);border:1px solid #191919;border-radius:8px 8px 0px 0px;"></div>
<svg class="a" style="left:1131px;top:710.5px;" width="5" height="8" viewBox="0 0 5 8"><path d="M4 0.5 L0.5 4 L4 7.5Z" fill="#8c8c8c"/></svg>
<svg class="a" style="left:1261px;top:710.5px;" width="5" height="8" viewBox="0 0 5 8"><path d="M1 0.5 L4.5 4 L1 7.5Z" fill="#8c8c8c"/></svg>
<div class="a " style="left:1125px;top:724px;width:147px;height:21px;background:linear-gradient(#a2a2a2,#b6b6b6);border:1px solid #191919;border-radius:0px 0px 0px 0px;"></div>
<svg class="a" style="left:1131px;top:730.0px;" width="5" height="8" viewBox="0 0 5 8"><path d="M4 0.5 L0.5 4 L4 7.5Z" fill="#8c8c8c"/></svg>
<svg class="a" style="left:1261px;top:730.0px;" width="5" height="8" viewBox="0 0 5 8"><path d="M1 0.5 L4.5 4 L1 7.5Z" fill="#8c8c8c"/></svg>
<div class="a " style="left:1125px;top:744px;width:147px;height:17px;background:linear-gradient(#a2a2a2,#b6b6b6);border:1px solid #191919;border-radius:0px 0px 8px 8px;"></div>
<svg class="a" style="left:1131px;top:748.0px;" width="5" height="8" viewBox="0 0 5 8"><path d="M4 0.5 L0.5 4 L4 7.5Z" fill="#8c8c8c"/></svg>
<svg class="a" style="left:1261px;top:748.0px;" width="5" height="8" viewBox="0 0 5 8"><path d="M1 0.5 L4.5 4 L1 7.5Z" fill="#8c8c8c"/></svg>
<div class="a t d" style="left:1141.40px;top:709.69px;font-size:11px;line-height:11px;color:#000;letter-spacing:0.271px;">Lines:</div>
<div class="a t d" style="left:1242.40px;top:709.69px;font-size:11px;line-height:11px;color:#000;letter-spacing:0.375px;">16</div>
<div class="a t d" style="left:1141.40px;top:728.69px;font-size:11px;line-height:11px;color:#000;letter-spacing:0.068px;">Scale:</div>
<div class="a t d" style="left:1225.40px;top:728.69px;font-size:11px;line-height:11px;color:#000;letter-spacing:0.487px;">1.000</div>
<div class="a " style="left:4px;top:749px;width:1293px;height:26px;background:#727272;"></div>
<div class="a " style="left:4px;top:748px;width:1293px;height:1px;background:#666666;"></div>
<div class="a " style="left:4px;top:749px;width:1293px;height:1px;background:#898989;"></div>
<div class="a t d" style="left:24.60px;top:757.69px;font-size:11px;line-height:11px;color:#000;letter-spacing:0.119px;">Rot: 24.90</div>
<svg class="a" style="left:4px;top:762px;" width="13" height="13" viewBox="0 0 13 13"><path d="M0 1 L12 13 M0 5 L8 13 M0 9 L4 13" stroke="#1e1e1e" stroke-width="1.1"/><path d="M0 2.3 L10.7 13 M0 6.3 L6.7 13 M0 10.3 L2.7 13" stroke="#a8a8a8" stroke-width="0.8"/></svg>
<div class="a " style="left:4px;top:775px;width:1293px;height:1px;background:#0d0d0d;"></div>
<div class="a " style="left:4px;top:776px;width:1293px;height:32px;background:#474747;"></div>
<div class="a " style="left:227px;top:776px;width:944px;height:32px;background:#717171;"></div>
<svg class="a" style="left:4px;top:776px;" width="1293" height="32" viewBox="0 0 1293 32"><rect x="10" y="0" width="1" height="32" fill="#4a4a4a"/><rect x="29" y="0" width="1" height="32" fill="#535353"/><rect x="48" y="0" width="1" height="32" fill="#4a4a4a"/><rect x="67" y="0" width="1" height="32" fill="#535353"/><rect x="86" y="0" width="1" height="32" fill="#4a4a4a"/><rect x="105" y="0" width="1" height="32" fill="#535353"/><rect x="124" y="0" width="1" height="32" fill="#4a4a4a"/><rect x="143" y="0" width="1" height="32" fill="#535353"/><rect x="162" y="0" width="1" height="32" fill="#4a4a4a"/><rect x="181" y="0" width="1" height="32" fill="#535353"/><rect x="200" y="0" width="1" height="32" fill="#4a4a4a"/><rect x="219" y="0" width="1" height="32" fill="#535353"/><rect x="238" y="0" width="1" height="32" fill="#6d6d6d"/><rect x="257" y="0" width="1" height="32" fill="#5a5a5a"/><rect x="276" y="0" width="1" height="32" fill="#6d6d6d"/><rect x="295" y="0" width="1" height="32" fill="#5a5a5a"/><rect x="314" y="0" width="1" height="32" fill="#6d6d6d"/><rect x="333" y="0" width="1" height="32" fill="#5a5a5a"/><rect x="352" y="0" width="1" height="32" fill="#6d6d6d"/><rect x="371" y="0" width="1" height="32" fill="#5a5a5a"/><rect x="390" y="0" width="1" height="32" fill="#6d6d6d"/><rect x="409" y="0" width="1" height="32" fill="#5a5a5a"/><rect x="428" y="0" width="1" height="32" fill="#6d6d6d"/><rect x="446" y="0" width="1" height="32" fill="#5a5a5a"/><rect x="465" y="0" width="1" height="32" fill="#6d6d6d"/><rect x="484" y="0" width="1" height="32" fill="#5a5a5a"/><rect x="503" y="0" width="1" height="32" fill="#6d6d6d"/><rect x="522" y="0" width="1" height="32" fill="#5a5a5a"/><rect x="541" y="0" width="1" height="32" fill="#6d6d6d"/><rect x="560" y="0" width="1" height="32" fill="#5a5a5a"/><rect x="579" y="0" width="1" height="32" fill="#6d6d6d"/><rect x="598" y="0" width="1" height="32" fill="#5a5a5a"/><rect x="617" y="0" width="1" height="32" fill="#6d6d6d"/><rect x="636" y="0" width="1" height="32" fill="#5a5a5a"/><rect x="655" y="0" width="1" height="32" fill="#6d6d6d"/><rect x="674" y="0" width="1" height="32" fill="#5a5a5a"/><rect x="693" y="0" width="1" height="32" fill="#6d6d6d"/><rect x="712" y="0" width="1" height="32" fill="#5a5a5a"/><rect x="731" y="0" width="1" height="32" fill="#6d6d6d"/><rect x="750" y="0" width="1" height="32" fill="#5a5a5a"/><rect x="769" y="0" width="1" height="32" fill="#6d6d6d"/><rect x="788" y="0" width="1" height="32" fill="#5a5a5a"/><rect x="807" y="0" width="1" height="32" fill="#6d6d6d"/><rect x="826" y="0" width="1" height="32" fill="#5a5a5a"/><rect x="845" y="0" width="1" height="32" fill="#6d6d6d"/><rect x="864" y="0" width="1" height="32" fill="#5a5a5a"/><rect x="882" y="0" width="1" height="32" fill="#6d6d6d"/><rect x="901" y="0" width="1" height="32" fill="#5a5a5a"/><rect x="920" y="0" width="1" height="32" fill="#6d6d6d"/><rect x="939" y="0" width="1" height="32" fill="#5a5a5a"/><rect x="958" y="0" width="1" height="32" fill="#6d6d6d"/><rect x="977" y="0" width="1" height="32" fill="#5a5a5a"/><rect x="996" y="0" width="1" height="32" fill="#6d6d6d"/><rect x="1015" y="0" width="1" height="32" fill="#5a5a5a"/><rect x="1034" y="0" width="1" height="32" fill="#6d6d6d"/><rect x="1053" y="0" width="1" height="32" fill="#5a5a5a"/><rect x="1072" y="0" width="1" height="32" fill="#6d6d6d"/><rect x="1091" y="0" width="1" height="32" fill="#5a5a5a"/><rect x="1110" y="0" width="1" height="32" fill="#6d6d6d"/><rect x="1129" y="0" width="1" height="32" fill="#5a5a5a"/><rect x="1148" y="0" width="1" height="32" fill="#6d6d6d"/><rect x="1167" y="0" width="1" height="32" fill="#5a5a5a"/><rect x="1186" y="0" width="1" height="32" fill="#4a4a4a"/><rect x="1205" y="0" width="1" height="32" fill="#535353"/><rect x="1224" y="0" width="1" height="32" fill="#4a4a4a"/><rect x="1243" y="0" width="1" height="32" fill="#535353"/><rect x="1262" y="0" width="1" height="32" fill="#4a4a4a"/><rect x="1281" y="0" width="1" height="32" fill="#535353"/></svg>
<div class="a " style="left:222px;top:776px;width:3px;height:32px;background:#6cc24a;"></div>
<div class="a " style="left:225px;top:776px;width:2px;height:32px;background:#3b5a30;"></div>
<svg class="a" style="left:222px;top:799px;" width="12" height="9" viewBox="0 0 12 9"><path d="M1 8 L5.5 0.8 L10.5 8Z" fill="#f0a030" stroke="#7a3a00" stroke-width="0.8"/><path d="M3.5 6.8 L5.6 3.5 L8 6.8Z" fill="#ffe8b0"/></svg>
<div class="a t" style="left:232.60px;top:795.69px;font-size:11px;line-height:11px;color:#f4f4f4;letter-spacing:-0.398px;">F_01</div>
<svg class="a" style="left:1284px;top:777px;" width="13" height="13" viewBox="0 0 13 13"><path d="M1 0 L13 12 M5 0 L13 8 M9 0 L13 4" stroke="#1e1e1e" stroke-width="1.1"/><path d="M2.3 0 L13 10.7 M6.3 0 L13 6.7 M10.3 0 L13 2.7" stroke="#a8a8a8" stroke-width="0.8"/></svg>
<div class="a " style="left:4px;top:808px;width:1293px;height:18px;background:#727272;"></div>
<div class="a " style="left:8px;top:809px;width:1284px;height:13px;background:linear-gradient(#a4a4a4,#8c8c8c);border:1px solid #3a3a3a;border-radius:6px 6px 6px 6px;"></div>
<svg class="a" style="left:10px;top:810px;" width="11" height="11" viewBox="0 0 11 11"><circle cx="5.5" cy="5.5" r="4" fill="none" stroke="#7a7a7a" stroke-width="1"/></svg>
<div class="a t d" style="left:26.60px;top:810.69px;font-size:11px;line-height:11px;color:#000;">-50</div>
<div class="a t d" style="left:64.21px;top:810.69px;font-size:11px;line-height:11px;color:#000;">-40</div>
<div class="a t d" style="left:101.82px;top:810.69px;font-size:11px;line-height:11px;color:#000;">-30</div>
<div class="a t d" style="left:139.43px;top:810.69px;font-size:11px;line-height:11px;color:#000;">-20</div>
<div class="a t d" style="left:177.04px;top:810.69px;font-size:11px;line-height:11px;color:#000;">-10</div>
<div class="a t d" style="left:222.54px;top:810.69px;font-size:11px;line-height:11px;color:#000;">0</div>
<div class="a t d" style="left:257.08px;top:810.69px;font-size:11px;line-height:11px;color:#000;">10</div>
<div class="a t d" style="left:294.69px;top:810.69px;font-size:11px;line-height:11px;color:#000;">20</div>
<div class="a t d" style="left:332.31px;top:810.69px;font-size:11px;line-height:11px;color:#000;">30</div>
<div class="a t d" style="left:369.91px;top:810.69px;font-size:11px;line-height:11px;color:#000;">40</div>
<div class="a t d" style="left:407.52px;top:810.69px;font-size:11px;line-height:11px;color:#000;">50</div>
<div class="a t d" style="left:445.13px;top:810.69px;font-size:11px;line-height:11px;color:#000;">60</div>
<div class="a t d" style="left:482.75px;top:810.69px;font-size:11px;line-height:11px;color:#000;">70</div>
<div class="a t d" style="left:520.36px;top:810.69px;font-size:11px;line-height:11px;color:#000;">80</div>
<div class="a t d" style="left:557.97px;top:810.69px;font-size:11px;line-height:11px;color:#000;">90</div>
<div class="a t d" style="left:592.51px;top:810.69px;font-size:11px;line-height:11px;color:#000;">100</div>
<div class="a t d" style="left:630.53px;top:810.69px;font-size:11px;line-height:11px;color:#000;">110</div>
<div class="a t d" style="left:667.73px;top:810.69px;font-size:11px;line-height:11px;color:#000;">120</div>
<div class="a t d" style="left:705.34px;top:810.69px;font-size:11px;line-height:11px;color:#000;">130</div>
<div class="a t d" style="left:742.95px;top:810.69px;font-size:11px;line-height:11px;color:#000;">140</div>
<div class="a t d" style="left:780.56px;top:810.69px;font-size:11px;line-height:11px;color:#000;">150</div>
<div class="a t d" style="left:818.17px;top:810.69px;font-size:11px;line-height:11px;color:#000;">160</div>
<div class="a t d" style="left:855.78px;top:810.69px;font-size:11px;line-height:11px;color:#000;">170</div>
<div class="a t d" style="left:893.39px;top:810.69px;font-size:11px;line-height:11px;color:#000;">180</div>
<div class="a t d" style="left:931.00px;top:810.69px;font-size:11px;line-height:11px;color:#000;">190</div>
<div class="a t d" style="left:968.61px;top:810.69px;font-size:11px;line-height:11px;color:#000;">200</div>
<div class="a t d" style="left:1006.22px;top:810.69px;font-size:11px;line-height:11px;color:#000;">210</div>
<div class="a t d" style="left:1043.83px;top:810.69px;font-size:11px;line-height:11px;color:#000;">220</div>
<div class="a t d" style="left:1081.44px;top:810.69px;font-size:11px;line-height:11px;color:#000;">230</div>
<div class="a t d" style="left:1119.05px;top:810.69px;font-size:11px;line-height:11px;color:#000;">240</div>
<div class="a t d" style="left:1156.66px;top:810.69px;font-size:11px;line-height:11px;color:#000;">250</div>
<div class="a t d" style="left:1194.27px;top:810.69px;font-size:11px;line-height:11px;color:#000;">260</div>
<div class="a t d" style="left:1231.88px;top:810.69px;font-size:11px;line-height:11px;color:#000;">270</div>
<div class="a t d" style="left:1269.49px;top:810.69px;font-size:11px;line-height:11px;color:#000;">280</div>
<div class="a " style="left:4px;top:826px;width:1293px;height:22px;background:#727272;"></div>
<div class="a " style="left:4px;top:825px;width:1293px;height:1px;background:#5e5e5e;"></div>
<svg class="a" style="left:4px;top:836px;" width="13" height="13" viewBox="0 0 13 13"><path d="M0 1 L12 13 M0 5 L8 13 M0 9 L4 13" stroke="#1e1e1e" stroke-width="1.1"/><path d="M0 2.3 L10.7 13 M0 6.3 L6.7 13 M0 10.3 L2.7 13" stroke="#a8a8a8" stroke-width="0.8"/></svg>
<div class="a " style="left:13px;top:829px;width:30px;height:22px;background:linear-gradient(#545454,#383838);border:1px solid #111;border-radius:4px 4px 4px 4px;"></div>
<svg class="a" style="left:17px;top:832px;" width="15" height="15" viewBox="0 0 15 15"><circle cx="7.5" cy="7.5" r="6.5" fill="#f2eaf0" stroke="#111" stroke-width="1.2"/><path d="M8.5 4 L5.5 7.5 L8.5 10.5" fill="none" stroke="#333" stroke-width="1.2"/></svg>
<svg class="a" style="left:33px;top:832px;" width="8" height="15" viewBox="0 0 8 15"><path d="M4 1 L7.5 6 L0.5 6Z" fill="#b9b9b9"/><path d="M4 14 L7.5 9 L0.5 9Z" fill="#b9b9b9"/></svg>
<div class="a t d" style="left:56.00px;top:834.69px;font-size:11px;line-height:11px;color:#000;letter-spacing:0.590px;">View</div>
<div class="a t d" style="left:100.40px;top:834.69px;font-size:11px;line-height:11px;color:#000;letter-spacing:0.047px;">Marker</div>
<div class="a t d" style="left:155.30px;top:834.69px;font-size:11px;line-height:11px;color:#000;letter-spacing:-0.156px;">Frame</div>
<div class="a t d" style="left:207.80px;top:834.69px;font-size:11px;line-height:11px;color:#000;letter-spacing:0.293px;">Playback</div>
<div class="a " style="left:265px;top:829px;width:20px;height:22px;background:linear-gradient(#a0a0a0,#909090);border:1px solid #191919;border-radius:4px 0px 0px 4px;"></div>
<div class="a " style="left:284px;top:829px;width:21px;height:22px;background:linear-gradient(#a0a0a0,#909090);border:1px solid #191919;border-radius:0px 4px 4px 0px;"></div>
<svg class="a" style="left:268px;top:832px;" width="15" height="15" viewBox="0 0 15 15"><circle cx="7.5" cy="7.5" r="6.3" fill="#f4f0f4" stroke="#111" stroke-width="1.2"/><path d="M7.5 7.5 V1.5 A6 6 0 0 1 13.5 7.5Z" fill="#f0c020"/><path d="M7.5 7.5 H12.5 M7.5 7.5 L5 10.5" stroke="#222" stroke-width="1.2"/></svg>
<svg class="a" style="left:287px;top:831px;" width="15" height="16" viewBox="0 0 15 16"><path d="M4 8 V5 A3.5 3.5 0 0 1 11 5 V8" fill="none" stroke="#111" stroke-width="2.8"/><path d="M4 8 V5 A3.5 3.5 0 0 1 11 5 V8" fill="none" stroke="#f4f4f4" stroke-width="1.3"/><rect x="2.5" y="8" width="10" height="7" fill="#f4f4f4" stroke="#111"/><rect x="7" y="10" width="1.5" height="3" fill="#333"/></svg>
<div class="a " style="left:310px;top:829px;width:117px;height:22px;background:linear-gradient(#a2a2a2,#b6b6b6);border:1px solid #191919;border-radius:9px 0px 0px 9px;"></div>
<svg class="a" style="left:316px;top:835.0px;" width="5" height="8" viewBox="0 0 5 8"><path d="M4 0.5 L0.5 4 L4 7.5Z" fill="#8c8c8c"/></svg>
<svg class="a" style="left:416px;top:835.0px;" width="5" height="8" viewBox="0 0 5 8"><path d="M1 0.5 L4.5 4 L1 7.5Z" fill="#8c8c8c"/></svg>
<div class="a " style="left:426px;top:829px;width:111px;height:22px;background:linear-gradient(#a2a2a2,#b6b6b6);border:1px solid #191919;border-radius:0px 9px 9px 0px;"></div>
<svg class="a" style="left:432px;top:835.0px;" width="5" height="8" viewBox="0 0 5 8"><path d="M4 0.5 L0.5 4 L4 7.5Z" fill="#8c8c8c"/></svg>
<svg class="a" style="left:526px;top:835.0px;" width="5" height="8" viewBox="0 0 5 8"><path d="M1 0.5 L4.5 4 L1 7.5Z" fill="#8c8c8c"/></svg>
<div class="a t d" style="left:326.00px;top:834.69px;font-size:11px;line-height:11px;color:#000;letter-spacing:0.615px;">Start:</div>
<div class="a t d" style="left:403.57px;top:834.69px;font-size:11px;line-height:11px;color:#000;">1</div>
<div class="a t d" style="left:442.30px;top:834.69px;font-size:11px;line-height:11px;color:#000;letter-spacing:0.336px;">End:</div>
<div class="a t d" style="left:501.60px;top:834.69px;font-size:11px;line-height:11px;color:#000;letter-spacing:0.542px;">250</div>
<div class="a " style="left:543px;top:829px;width:90px;height:22px;background:linear-gradient(#a2a2a2,#b6b6b6);border:1px solid #191919;border-radius:9px 9px 9px 9px;"></div>
<svg class="a" style="left:549px;top:835.0px;" width="5" height="8" viewBox="0 0 5 8"><path d="M4 0.5 L0.5 4 L4 7.5Z" fill="#8c8c8c"/></svg>
<svg class="a" style="left:622px;top:835.0px;" width="5" height="8" viewBox="0 0 5 8"><path d="M1 0.5 L4.5 4 L1 7.5Z" fill="#8c8c8c"/></svg>
<div class="a t d" style="left:610.27px;top:834.69px;font-size:11px;line-height:11px;color:#000;">0</div>
<div class="a " style="left:649px;top:829px;width:21px;height:22px;background:linear-gradient(#a6a6a6,#8e8e8e);border:1px solid #191919;border-radius:4px 0px 0px 4px;"></div>
<div class="a " style="left:669px;top:829px;width:21px;height:22px;background:linear-gradient(#a6a6a6,#8e8e8e);border:1px solid #191919;border-radius:0px 0px 0px 0px;"></div>
<div class="a " style="left:689px;top:829px;width:20px;height:22px;background:linear-gradient(#a6a6a6,#8e8e8e);border:1px solid #191919;border-radius:0px 0px 0px 0px;"></div>
<div class="a " style="left:708px;top:829px;width:21px;height:22px;background:linear-gradient(#a6a6a6,#8e8e8e);border:1px solid #191919;border-radius:0px 0px 0px 0px;"></div>
<div class="a " style="left:728px;top:829px;width:22px;height:22px;background:linear-gradient(#a6a6a6,#8e8e8e);border:1px solid #191919;border-radius:0px 0px 0px 0px;"></div>
<div class="a " style="left:749px;top:829px;width:20px;height:22px;background:linear-gradient(#a6a6a6,#8e8e8e);border:1px solid #191919;border-radius:0px 4px 4px 0px;"></div>
<svg class="a" style="left:651.5px;top:832px;" width="15" height="15" viewBox="0 0 15 15"><path d="M3 3 V12 M12 3 L6 7.5 L12 12 Z M8 3 L3.5 7.5 L8 12" fill="#f2f2f2" stroke="#111" stroke-width="1"/></svg>
<svg class="a" style="left:671.5px;top:832px;" width="15" height="15" viewBox="0 0 15 15"><path d="M8 3 L3 7.5 L8 12 Z M13 3 L8 7.5 L13 12Z" fill="#f2f2f2" stroke="#111" stroke-width="1"/></svg>
<svg class="a" style="left:691.0px;top:832px;" width="15" height="15" viewBox="0 0 15 15"><path d="M12 2 L3 7.5 L12 13 Z" fill="#f2f2f2" stroke="#111" stroke-width="1.2"/></svg>
<svg class="a" style="left:710.5px;top:832px;" width="15" height="15" viewBox="0 0 15 15"><path d="M3 2 L12 7.5 L3 13 Z" fill="#f2f2f2" stroke="#111" stroke-width="1.2"/></svg>
<svg class="a" style="left:731.0px;top:832px;" width="15" height="15" viewBox="0 0 15 15"><path d="M2 3 L7 7.5 L2 12 Z M7 3 L12 7.5 L7 12Z" fill="#f2f2f2" stroke="#111" stroke-width="1"/></svg>
<svg class="a" style="left:751.0px;top:832px;" width="15" height="15" viewBox="0 0 15 15"><path d="M12 3 V12 M3 3 L9 7.5 L3 12 Z M7 3 L11.5 7.5 L7 12" fill="#f2f2f2" stroke="#111" stroke-width="1"/></svg>
<div class="a " style="left:775px;top:829px;width:114px;height:22px;background:linear-gradient(#525252,#383838);border:1px solid #111;border-radius:4px 4px 4px 4px;"></div>
<div class="a t" style="left:782.30px;top:834.69px;font-size:11px;line-height:11px;color:#fff;letter-spacing:-0.228px;">No Sync</div>
<svg class="a" style="left:878px;top:832px;" width="8" height="15" viewBox="0 0 8 15"><path d="M4 1 L7.5 6 L0.5 6Z" fill="#b9b9b9"/><path d="M4 14 L7.5 9 L0.5 9Z" fill="#b9b9b9"/></svg>
<div class="a " style="left:905px;top:829px;width:20px;height:22px;background:linear-gradient(#a6a6a6,#8e8e8e);border:1px solid #191919;border-radius:4px 4px 4px 4px;"></div>
<svg class="a" style="left:908px;top:832px;" width="14" height="14" viewBox="0 0 14 14"><circle cx="7" cy="7" r="4.6" fill="#e8401c" stroke="#6a1000" stroke-width="1"/></svg>
<div class="a " style="left:931px;top:829px;width:130px;height:22px;background:linear-gradient(#9a9a9a,#c4c4c4);border:1px solid #191919;border-radius:4px 0px 0px 4px;"></div>
<svg class="a" style="left:934px;top:831px;" width="18" height="16" viewBox="0 0 18 16"><circle cx="5" cy="12" r="2.6" fill="none" stroke="#111" stroke-width="2.2"/><circle cx="5" cy="12" r="2.6" fill="none" stroke="#f0e060" stroke-width="1"/><path d="M5 9 V1 H8 M5 4 H8 M8 11 L14 6" stroke="#111" stroke-width="2.2" fill="none"/><path d="M5 9 V1 H8 M5 4 H8 M8 11 L14 6" stroke="#f0e060" stroke-width="1" fill="none"/></svg>
<div class="a " style="left:1060px;top:829px;width:21px;height:22px;background:linear-gradient(#a0a0a0,#909090);border:1px solid #191919;border-radius:0px 0px 0px 0px;"></div>
<div class="a " style="left:1080px;top:829px;width:21px;height:22px;background:linear-gradient(#a0a0a0,#909090);border:1px solid #191919;border-radius:0px 4px 4px 0px;"></div>
<svg class="a" style="left:1063px;top:832px;" width="15" height="15" viewBox="0 0 15 15"><circle cx="4" cy="11" r="2.6" fill="none" stroke="#111" stroke-width="2.2"/><circle cx="4" cy="11" r="2.6" fill="none" stroke="#fff" stroke-width="1"/><path d="M6 9 L12 3" stroke="#111" stroke-width="2.6"/><path d="M6 9 L12 3" stroke="#fff" stroke-width="1.2"/></svg>
<svg class="a" style="left:1083px;top:832px;" width="15" height="15" viewBox="0 0 15 15"><circle cx="4" cy="11" r="2.6" fill="none" stroke="#111" stroke-width="2.2"/><circle cx="4" cy="11" r="2.6" fill="none" stroke="#fff" stroke-width="1"/><path d="M6 9 L12 3" stroke="#111" stroke-width="2.6"/><path d="M6 9 L12 3" stroke="#fff" stroke-width="1.2"/><path d="M2 2 L13 13 M13 2 L2 13" stroke="#c84a4a" stroke-width="1.6"/></svg>
<div class="a " style="left:1297px;top:50px;width:1px;height:798px;background:#111;"></div>
<div class="a " style="left:1298px;top:50px;width:298px;height:26px;background:#727272;"></div>
<div class="a " style="left:1307px;top:53px;width:30px;height:20px;background:linear-gradient(#545454,#383838);border:1px solid #111;border-radius:4px 4px 4px 4px;"></div>
<svg class="a" style="left:1311px;top:55px;" width="16" height="16" viewBox="0 0 16 16"><rect x="1" y="1.5" width="6" height="2.5" fill="#f0d080"/><path d="M3 4 V13 H6 M3 8.5 H6" stroke="#ddd" stroke-width="1" fill="none"/><rect x="6.5" y="7.3" width="6" height="2.5" fill="#f4f4f4"/><rect x="6.5" y="11.8" width="6" height="2.5" fill="#f4f4f4"/></svg>
<svg class="a" style="left:1328px;top:56px;" width="8" height="15" viewBox="0 0 8 15"><path d="M4 1 L7.5 6 L0.5 6Z" fill="#b9b9b9"/><path d="M4 14 L7.5 9 L0.5 9Z" fill="#b9b9b9"/></svg>
<div class="a t d" style="left:1349.60px;top:58.69px;font-size:11px;line-height:11px;color:#000;letter-spacing:0.590px;">View</div>
<div class="a t d" style="left:1394.70px;top:58.69px;font-size:11px;line-height:11px;color:#000;letter-spacing:0.354px;">Search</div>
<div class="a " style="left:1442px;top:53px;width:118px;height:20px;background:linear-gradient(#525252,#383838);border:1px solid #111;border-radius:4px 4px 4px 4px;"></div>
<div class="a t" style="left:1449.20px;top:58.69px;font-size:11px;line-height:11px;color:#fff;letter-spacing:0.200px;">All Scenes</div>
<svg class="a" style="left:1549px;top:56px;" width="8" height="15" viewBox="0 0 8 15"><path d="M4 1 L7.5 6 L0.5 6Z" fill="#b9b9b9"/><path d="M4 14 L7.5 9 L0.5 9Z" fill="#b9b9b9"/></svg>
<div class="a " style="left:1566px;top:53px;width:40px;height:20px;background:linear-gradient(#a8a8a8,#989898);border:1px solid #191919;border-radius:4px 0px 0px 4px;"></div>
<svg class="a" style="left:1569px;top:54px;" width="18" height="18" viewBox="0 0 18 18"><circle cx="10.5" cy="7" r="5" fill="#c8c8c8" stroke="#111" stroke-width="1.6"/><circle cx="10.5" cy="7" r="3.4" fill="none" stroke="#f4f4f4" stroke-width="0.8"/><path d="M7 10.5 L2 15.5" stroke="#111" stroke-width="3.2"/><path d="M7 10.5 L2.3 15.2" stroke="#c07050" stroke-width="1.6"/></svg>
<svg class="a" style="left:1583px;top:50px;" width="13" height="13" viewBox="0 0 13 13"><path d="M1 0 L13 12 M5 0 L13 8 M9 0 L13 4" stroke="#1e1e1e" stroke-width="1.1"/><path d="M2.3 0 L13 10.7 M6.3 0 L13 6.7 M10.3 0 L13 2.7" stroke="#a8a8a8" stroke-width="0.8"/></svg>
<div class="a " style="left:1298px;top:76px;width:298px;height:109px;background:#727272;"></div>
<div class="a " style="left:1298px;top:77px;width:281px;height:20px;background:#727272;"></div>
<div class="a " style="left:1298px;top:97px;width:281px;height:20px;background:#6e6e6e;"></div>
<div class="a " style="left:1298px;top:117px;width:281px;height:20px;background:#727272;"></div>
<div class="a " style="left:1298px;top:137px;width:281px;height:20px;background:#6e6e6e;"></div>
<div class="a " style="left:1298px;top:157px;width:281px;height:20px;background:#727272;"></div>
<div class="a " style="left:1298px;top:77px;width:221px;height:19px;background:#868a92;"></div>
<div class="a " style="left:1519px;top:76px;width:1px;height:100px;background:#666;"></div>
<div class="a " style="left:1539px;top:76px;width:1px;height:100px;background:#666;"></div>
<div class="a " style="left:1559px;top:76px;width:1px;height:100px;background:#666;"></div>
<div class="a " style="left:1324px;top:96px;width:1px;height:70px;background:#2a2a2a;"></div>
<div class="a " style="left:1310px;top:86px;width:12px;height:1px;background:#2a2a2a;"></div>
<div class="a " style="left:1334px;top:106px;width:4px;height:1px;background:#2a2a2a;"></div>
<div class="a " style="left:1325px;top:146px;width:14px;height:1px;background:#2a2a2a;"></div>
<svg class="a" style="left:1301px;top:81px;" width="10" height="10" viewBox="0 0 10 10"><circle cx="5" cy="5" r="4.2" fill="#e8e8e8" stroke="#111" stroke-width="1"/><path d="M2.7 5 H7.3" stroke="#111" stroke-width="1.2"/></svg>
<svg class="a" style="left:1325px;top:101px;" width="10" height="10" viewBox="0 0 10 10"><circle cx="5" cy="5" r="4.2" fill="#e8e8e8" stroke="#111" stroke-width="1"/><path d="M2.7 5 H7.3 M5 2.7 V7.3" stroke="#111" stroke-width="1.2"/></svg>
<svg class="a" style="left:1320px;top:141px;" width="10" height="10" viewBox="0 0 10 10"><circle cx="5" cy="5" r="4.2" fill="#e8e8e8" stroke="#111" stroke-width="1"/><path d="M2.7 5 H7.3 M5 2.7 V7.3" stroke="#111" stroke-width="1.2"/></svg>
<svg class="a" style="left:1320px;top:161px;" width="10" height="10" viewBox="0 0 10 10"><circle cx="5" cy="5" r="4.2" fill="#e8e8e8" stroke="#111" stroke-width="1"/><path d="M2.7 5 H7.3 M5 2.7 V7.3" stroke="#111" stroke-width="1.2"/></svg>
<svg class="a" style="left:1319px;top:78px;" width="18" height="17" viewBox="0 0 18 17"><circle cx="9" cy="9" r="8" fill="#9aa2a8" opacity="0.5"/><circle cx="5" cy="4" r="2.2" fill="#d8f080"/><rect x="9" y="2.5" width="5" height="9" rx="2.5" fill="#8ab0e8" stroke="#1a2030" stroke-width="0.9"/><circle cx="6" cy="11.5" r="3.4" fill="#f4f4f4" stroke="#111" stroke-width="0.9"/></svg>
<div class="a t d" style="left:1338.30px;top:82.69px;font-size:11px;line-height:11px;color:#000;letter-spacing:-0.044px;">Scene</div>
<svg class="a" style="left:1339px;top:98px;" width="17" height="17" viewBox="0 0 17 17"><rect x="4" y="4.5" width="10" height="10" fill="#e8e8e8" stroke="#222" stroke-width="0.9" transform="rotate(8 9 9)"/><rect x="1.5" y="1.5" width="10" height="10" fill="#d8d8d8" stroke="#222" stroke-width="0.9"/><rect x="3" y="3" width="7" height="7" fill="#6a8ad0"/><path d="M5 9 C5 6 8 6 7 4" stroke="#fff" stroke-width="1" fill="none"/></svg>
<div class="a t d" style="left:1358.00px;top:102.69px;font-size:11px;line-height:11px;color:#000;letter-spacing:-0.010px;">RenderLayers</div>
<div class="a " style="left:1436px;top:102px;width:2px;height:12px;background:#4a4a4a;"></div>
<svg class="a" style="left:1447px;top:98px;" width="17" height="17" viewBox="0 0 17 17"><rect x="4" y="4.5" width="10" height="10" fill="#e8e8e8" stroke="#222" stroke-width="0.9" transform="rotate(8 9 9)"/><rect x="1.5" y="1.5" width="10" height="10" fill="#d8d8d8" stroke="#222" stroke-width="0.9"/><rect x="3" y="3" width="7" height="7" fill="#6a8ad0"/><path d="M5 9 C5 6 8 6 7 4" stroke="#fff" stroke-width="1" fill="none"/></svg>
<svg class="a" style="left:1339px;top:118px;" width="17" height="17" viewBox="0 0 17 17"><circle cx="8.5" cy="8.5" r="7.5" fill="#5a7890" stroke="#aac0d8" stroke-width="1"/><circle cx="8.5" cy="8.5" r="6" fill="#4a7a98"/><path d="M4 6 C6 4 8 7 10 5 C12 7 11 10 13 11 C10 13 7 12 5 11Z" fill="#3a8a68"/></svg>
<div class="a t d" style="left:1358.00px;top:122.69px;font-size:11px;line-height:11px;color:#000;letter-spacing:0.297px;">World</div>
<svg class="a" style="left:1339px;top:138px;" width="17" height="17" viewBox="0 0 17 17"><circle cx="5" cy="4.5" r="3.5" fill="#f0a050" stroke="#5a2a00" stroke-width="0.9"/><circle cx="11" cy="4.5" r="3.5" fill="#f0a050" stroke="#5a2a00" stroke-width="0.9"/><rect x="3" y="8" width="10" height="6" fill="#f0a050" stroke="#5a2a00" stroke-width="0.9"/><path d="M13 9.5 L16 8 V14 L13 12.5Z" fill="#f0a050" stroke="#5a2a00" stroke-width="0.8"/></svg>
<div class="a t d" style="left:1358.00px;top:142.69px;font-size:11px;line-height:11px;color:#000;letter-spacing:-0.354px;">Camera</div>
<div class="a " style="left:1407px;top:141px;width:2px;height:12px;background:#4a4a4a;"></div>
<svg class="a" style="left:1416px;top:137px;" width="20" height="20" viewBox="0 0 20 20"><circle cx="10" cy="10" r="9" fill="#8a8a8a" opacity="0.6"/><circle cx="7" cy="7" r="3" fill="none" stroke="#b0b0b0" stroke-width="1.2"/><circle cx="13" cy="7" r="3" fill="none" stroke="#b0b0b0" stroke-width="1.2"/><rect x="5" y="11" width="9" height="5" fill="none" stroke="#b0b0b0" stroke-width="1.2"/></svg>
<svg class="a" style="left:1522px;top:142px;" width="15" height="10" viewBox="0 0 15 10"><path d="M1 5 C4 0.5 11 0.5 14 5 C11 9.5 4 9.5 1 5Z" fill="#f4f4f4" stroke="#111" stroke-width="1"/><circle cx="7.5" cy="5" r="2.2" fill="#111"/></svg>
<svg class="a" style="left:1546px;top:140px;" width="10" height="14" viewBox="0 0 10 14"><path d="M1 1 L1 11 L3.5 8.5 L6 13 L7.5 12 L5.2 7.8 L8.5 7.5Z" fill="#f4f4f4" stroke="#111" stroke-width="1"/></svg>
<svg class="a" style="left:1562px;top:140px;" width="15" height="13" viewBox="0 0 15 13"><rect x="1" y="3" width="13" height="9" fill="#f4f4f4" stroke="#111" stroke-width="1"/><rect x="2" y="1" width="3" height="2" fill="#f4f4f4" stroke="#111" stroke-width="0.8"/><circle cx="8.5" cy="7.5" r="2.8" fill="#ccc" stroke="#111" stroke-width="1"/></svg>
<svg class="a" style="left:1339px;top:158px;" width="17" height="17" viewBox="0 0 17 17"><path d="M2 3 L15 3 L8.5 14Z" fill="#f0a050" stroke="#5a2a00" stroke-width="1"/></svg>
<div class="a t d" style="left:1358.00px;top:162.69px;font-size:11px;line-height:11px;color:#000;letter-spacing:0.651px;">Circle</div>
<div class="a " style="left:1398px;top:161px;width:2px;height:12px;background:#4a4a4a;"></div>
<svg class="a" style="left:1409px;top:159px;" width="16" height="10" viewBox="0 0 16 10"><path d="M3 3 L13 3 L8 9Z" fill="none" stroke="#d0d0d0" stroke-width="1"/><circle cx="3" cy="3" r="1.6" fill="#eee" stroke="#111" stroke-width="0.6"/><circle cx="13" cy="3" r="1.6" fill="#eee" stroke="#111" stroke-width="0.6"/></svg>
<svg class="a" style="left:1522px;top:162px;" width="15" height="10" viewBox="0 0 15 10"><path d="M1 5 C4 0.5 11 0.5 14 5 C11 9.5 4 9.5 1 5Z" fill="#f4f4f4" stroke="#111" stroke-width="1"/><circle cx="7.5" cy="5" r="2.2" fill="#111"/></svg>
<svg class="a" style="left:1546px;top:160px;" width="10" height="14" viewBox="0 0 10 14"><path d="M1 1 L1 11 L3.5 8.5 L6 13 L7.5 12 L5.2 7.8 L8.5 7.5Z" fill="#f4f4f4" stroke="#111" stroke-width="1"/></svg>
<svg class="a" style="left:1562px;top:160px;" width="15" height="13" viewBox="0 0 15 13"><rect x="1" y="3" width="13" height="9" fill="#f4f4f4" stroke="#111" stroke-width="1"/><rect x="2" y="1" width="3" height="2" fill="#f4f4f4" stroke="#111" stroke-width="0.8"/><circle cx="8.5" cy="7.5" r="2.8" fill="#ccc" stroke="#111" stroke-width="1"/></svg>
<div class="a " style="left:1298px;top:167px;width:281px;height:18px;background:#727272;"></div>
<div class="a " style="left:1303px;top:169px;width:272px;height:12px;background:#5c5c5c;border-radius:6px;"></div>
<div class="a " style="left:1303px;top:169px;width:254px;height:12px;background:linear-gradient(#a2a2a2,#8e8e8e);border:1px solid #5a5a5a;border-radius:6px;"></div>
<svg class="a" style="left:1298px;top:172px;" width="13" height="13" viewBox="0 0 13 13"><path d="M0 1 L12 13 M0 5 L8 13 M0 9 L4 13" stroke="#1e1e1e" stroke-width="1.1"/><path d="M0 2.3 L10.7 13 M0 6.3 L6.7 13 M0 10.3 L2.7 13" stroke="#a8a8a8" stroke-width="0.8"/></svg>
<div class="a " style="left:1579px;top:81px;width:13px;height:80px;background:#5e5e5e;border-radius:6px;"></div>
<div class="a " style="left:1579px;top:81px;width:13px;height:22px;background:linear-gradient(to right,#8a8a8a,#a0a0a0,#8a8a8a);border:1px solid #5a5a5a;border-radius:6px;"></div>
<div class="a " style="left:1298px;top:185px;width:298px;height:1px;background:#0d0d0d;"></div>
<div class="a " style="left:1298px;top:186px;width:298px;height:662px;background:#727272;"></div>
<div class="a " style="left:1298px;top:186px;width:298px;height:26px;background:#727272;"></div>
<div class="a " style="left:1307px;top:189px;width:30px;height:20px;background:linear-gradient(#545454,#383838);border:1px solid #111;border-radius:4px 4px 4px 4px;"></div>
<svg class="a" style="left:1310px;top:192px;" width="16" height="14" viewBox="0 0 16 14"><rect x="1" y="1" width="12" height="4.5" rx="1.5" fill="#5a5a5a" stroke="#ddd" stroke-width="0.8"/><rect x="8" y="1.5" width="4.5" height="3.5" fill="#f4f4f4"/><rect x="1" y="8" width="12" height="5" rx="2.5" fill="#f4f4f4" stroke="#111" stroke-width="0.6"/><path d="M3.5 10.5 L2 10.5 M10.5 10.5 H12" stroke="#111" stroke-width="1"/></svg>
<svg class="a" style="left:1328px;top:192px;" width="8" height="15" viewBox="0 0 8 15"><path d="M4 1 L7.5 6 L0.5 6Z" fill="#b9b9b9"/><path d="M4 14 L7.5 9 L0.5 9Z" fill="#b9b9b9"/></svg>
<div class="a " style="left:1345px;top:189px;width:240px;height:20px;background:linear-gradient(#535353,#3a3a3a);border:1px solid #111;border-radius:5px;"></div>
<div class="a " style="left:1384.4px;top:190px;width:20px;height:18px;background:linear-gradient(#6a94d8,#4c76b8);"></div>
<div class="a " style="left:1364px;top:190px;width:1px;height:18px;background:#151515;"></div>
<div class="a " style="left:1384px;top:190px;width:1px;height:18px;background:#151515;"></div>
<div class="a " style="left:1404px;top:190px;width:1px;height:18px;background:#151515;"></div>
<div class="a " style="left:1424px;top:190px;width:1px;height:18px;background:#151515;"></div>
<div class="a " style="left:1444px;top:190px;width:1px;height:18px;background:#151515;"></div>
<div class="a " style="left:1464px;top:190px;width:1px;height:18px;background:#151515;"></div>
<div class="a " style="left:1484px;top:190px;width:1px;height:18px;background:#151515;"></div>
<div class="a " style="left:1504px;top:190px;width:1px;height:18px;background:#151515;"></div>
<div class="a " style="left:1524px;top:190px;width:1px;height:18px;background:#151515;"></div>
<div class="a " style="left:1545px;top:190px;width:1px;height:18px;background:#151515;"></div>
<div class="a " style="left:1564px;top:190px;width:1px;height:18px;background:#151515;"></div>
<svg class="a" style="left:1346.2px;top:190px;" width="17" height="17" viewBox="0 0 17 17"><rect x="2" y="5" width="13" height="9" fill="#7a7a7a" stroke="#333" stroke-width="0.8"/><rect x="3" y="3" width="3" height="2" fill="#888"/><circle cx="10" cy="9.5" r="3" fill="#555" stroke="#999" stroke-width="0.8"/></svg>
<svg class="a" style="left:1365.9px;top:190px;" width="17" height="17" viewBox="0 0 17 17"><rect x="5" y="5" width="10" height="10" fill="#b8b8b8" transform="rotate(8 10 10)"/><rect x="2" y="2" width="10" height="10" fill="#c8c8c8" stroke="#333" stroke-width="0.7"/><rect x="3.5" y="3.5" width="7" height="7" fill="#6a7aa0"/></svg>
<svg class="a" style="left:1385.85px;top:190px;" width="17" height="17" viewBox="0 0 17 17"><circle cx="5" cy="4" r="2" fill="#f0f090"/><rect x="9.5" y="2.5" width="5" height="9" rx="2.5" fill="#a8c8f0" stroke="#112" stroke-width="0.9"/><circle cx="6.5" cy="11.5" r="3.5" fill="#f4f4f4" stroke="#111" stroke-width="1"/></svg>
<svg class="a" style="left:1405.8px;top:190px;" width="17" height="17" viewBox="0 0 17 17"><circle cx="8.5" cy="9" r="6.5" fill="#5a6a70" stroke="#8a9aa0" stroke-width="0.8"/><path d="M4 7 C6 5 8 8 10 6 C12 8 11 11 13 12 C10 14 7 13 5 12Z" fill="#4a7a6a" opacity="0.8"/></svg>
<svg class="a" style="left:1425.75px;top:190px;" width="17" height="17" viewBox="0 0 17 17"><path d="M8.5 2 L15 5 L15 12.5 L8.5 15.5 L2 12.5 L2 5Z" fill="#a07850" stroke="#3a2a1a" stroke-width="0.8"/><path d="M2 5 L8.5 8 L15 5 M8.5 8 V15.5" stroke="#d0a878" stroke-width="0.8" fill="none"/></svg>
<svg class="a" style="left:1445.7px;top:190px;" width="17" height="17" viewBox="0 0 17 17"><path d="M3 11 L6 8 C7.5 6.5 9.5 6.5 10 8" stroke="#c8c8c8" stroke-width="1.8" fill="none"/><path d="M14 6 L11 9 C9.5 10.5 7.5 10.5 7 9" stroke="#c8c8c8" stroke-width="1.8" fill="none"/><rect x="1.5" y="8.5" width="6" height="4" rx="2" transform="rotate(-45 4.5 10.5)" fill="none" stroke="#c8c8c8" stroke-width="1.4"/><rect x="9.5" y="4.5" width="6" height="4" rx="2" transform="rotate(-45 12.5 6.5)" fill="none" stroke="#c8c8c8" stroke-width="1.4"/></svg>
<svg class="a" style="left:1465.75px;top:190px;" width="17" height="17" viewBox="0 0 17 17"><path d="M3 14 L10 7" stroke="#a8b8d0" stroke-width="2.6"/><circle cx="11.5" cy="5.5" r="3.2" fill="none" stroke="#a8b8d0" stroke-width="1.8"/></svg>
<svg class="a" style="left:1485.8px;top:190px;" width="17" height="17" viewBox="0 0 17 17"><path d="M3 4 L14 4 L8.5 13Z" fill="none" stroke="#d8d8d8" stroke-width="0.9"/><circle cx="3" cy="4" r="1.7" fill="#fff" stroke="#111" stroke-width="0.7"/><circle cx="14" cy="4" r="1.7" fill="#fff" stroke="#111" stroke-width="0.7"/><circle cx="8.5" cy="13" r="1.7" fill="#fff" stroke="#111" stroke-width="0.7"/></svg>
<svg class="a" style="left:1505.75px;top:190px;" width="17" height="17" viewBox="0 0 17 17"><circle cx="8.5" cy="9" r="6.5" fill="#8a7a70" stroke="#333" stroke-width="0.8"/><circle cx="7" cy="7" r="3" fill="#b0a8a0"/></svg>
<svg class="a" style="left:1525.9px;top:190px;" width="17" height="17" viewBox="0 0 17 17"><rect x="2.5" y="2.5" width="12" height="12" fill="#e8d0d0" stroke="#333" stroke-width="0.6"/><path d="M2.5 2.5 h3v3h-3z M8.5 2.5 h3v3h-3z M5.5 5.5 h3v3h-3z M11.5 5.5 h3v3h-3z M2.5 8.5 h3v3h-3z M8.5 8.5 h3v3h-3z M5.5 11.5 h3v3h-3z M11.5 11.5 h3v3h-3z" fill="#7a2030"/></svg>
<svg class="a" style="left:1546.05px;top:190px;" width="17" height="17" viewBox="0 0 17 17"><path d="M4 2 V8 M1 5 H7 M12 3 V9 M9 6 H15 M7 9 V16 M4 12.5 H10 M12.5 11 V15 M10.5 13 H14.5" stroke="#e8d8a0" stroke-width="0.9"/></svg>
<svg class="a" style="left:1565.8px;top:190px;" width="17" height="17" viewBox="0 0 17 17"><path d="M3 9 L7 13 L11 5" stroke="#5a7ab0" stroke-width="2.2" fill="none"/><circle cx="12" cy="5" r="3" fill="#d0d0e0" stroke="#444" stroke-width="0.6"/></svg>
<svg class="a" style="left:1583px;top:186px;" width="13" height="13" viewBox="0 0 13 13"><path d="M1 0 L13 12 M5 0 L13 8 M9 0 L13 4" stroke="#1e1e1e" stroke-width="1.1"/><path d="M2.3 0 L13 10.7 M6.3 0 L13 6.7 M10.3 0 L13 2.7" stroke="#a8a8a8" stroke-width="0.8"/></svg>
<div class="a " style="left:1298px;top:211px;width:298px;height:1px;background:#5e5e5e;"></div>
<div class="a " style="left:1580px;top:217px;width:12px;height:629px;background:linear-gradient(to right,#5e5e5e,#686868);border-radius:6px;"></div>
<div class="a " style="left:1580px;top:217px;width:12px;height:576px;background:linear-gradient(to right,#8a8a8a,#9a9a9a 40%,#8a8a8a);border:1px solid #5e5e5e;border-radius:6px;"></div>
<svg class="a" style="left:1307px;top:221px;" width="17" height="17" viewBox="0 0 17 17"><path d="M2 15 L7 10" stroke="#111" stroke-width="2.4"/><path d="M2 15 L7 10" stroke="#f0f0f0" stroke-width="1"/><path d="M6 6 L11 11 L12.5 9.5 L11.5 8 L14.5 5 L15.5 5.5 L16 5 L12 1 L11.5 1.5 L12 2.5 L9 5.5 L7.5 4.5Z" fill="#f0f0f0" stroke="#111" stroke-width="0.9"/></svg>
<svg class="a" style="left:1329px;top:221px;" width="17" height="17" viewBox="0 0 17 17"><circle cx="5" cy="3.5" r="2.2" fill="#e8f090"/><rect x="9.5" y="2.5" width="5" height="9" rx="2.5" fill="#8ab0e8" stroke="#112" stroke-width="0.9"/><circle cx="6.5" cy="11.5" r="3.5" fill="#f4f4f4" stroke="#111" stroke-width="1"/></svg>
<div class="a t d" style="left:1349.60px;top:225.69px;font-size:11px;line-height:11px;color:#000;letter-spacing:-0.044px;">Scene</div>
<div class="a " style="left:1303px;top:247px;width:272px;height:1px;background:#5a5a5a;"></div>
<div class="a " style="left:1303px;top:248px;width:272px;height:1px;background:#828282;"></div>
<svg class="a" style="left:1311px;top:256px;" width="9" height="8" viewBox="0 0 9 8"><path d="M0 0.5 L8.5 0.5 L4.25 7.5Z" fill="#1e1e1e"/></svg>
<div class="a t d" style="left:1323.30px;top:254.69px;font-size:11px;line-height:11px;color:#000;letter-spacing:-0.044px;">Scene</div>
<svg class="a" style="left:1558px;top:259px;" width="11" height="4" viewBox="0 0 11 4"><rect x="0" y="0" width="1" height="1" fill="#e6e6e6"/><rect x="0" y="1" width="1" height="1" fill="#111"/><rect x="0" y="2" width="1" height="1" fill="#e6e6e6"/><rect x="0" y="3" width="1" height="1" fill="#111"/><rect x="3" y="0" width="1" height="1" fill="#e6e6e6"/><rect x="3" y="1" width="1" height="1" fill="#111"/><rect x="3" y="2" width="1" height="1" fill="#e6e6e6"/><rect x="3" y="3" width="1" height="1" fill="#111"/><rect x="6" y="0" width="1" height="1" fill="#e6e6e6"/><rect x="6" y="1" width="1" height="1" fill="#111"/><rect x="6" y="2" width="1" height="1" fill="#e6e6e6"/><rect x="6" y="3" width="1" height="1" fill="#111"/><rect x="9" y="0" width="1" height="1" fill="#e6e6e6"/><rect x="9" y="1" width="1" height="1" fill="#111"/><rect x="9" y="2" width="1" height="1" fill="#e6e6e6"/><rect x="9" y="3" width="1" height="1" fill="#111"/></svg>
<div class="a t d" style="left:1313.00px;top:285.69px;font-size:11px;line-height:11px;color:#000;letter-spacing:-0.027px;">Camera:</div>
<div class="a " style="left:1398px;top:280px;width:173px;height:20px;background:linear-gradient(#9c9c9c,#b4b4b4);border:1px solid #191919;border-radius:4px 4px 4px 4px;"></div>
<svg class="a" style="left:1403px;top:282px;" width="16" height="16" viewBox="0 0 16 16"><path d="M8 1.5 L14.5 4.5 L14.5 11.5 L8 14.5 L1.5 11.5 L1.5 4.5Z" fill="#f0a850" stroke="#3a2000" stroke-width="0.9"/><path d="M1.5 4.5 L8 7.5 L14.5 4.5 M8 7.5 V14.5" stroke="#ffd8a0" stroke-width="0.8" fill="none"/></svg>
<div class="a t d" style="left:1421.90px;top:285.69px;font-size:11px;line-height:11px;color:#000;letter-spacing:-0.354px;">Camera</div>
<svg class="a" style="left:1553px;top:283px;" width="14" height="14" viewBox="0 0 14 14"><path d="M2.5 2.5 L11.5 11.5 M11.5 2.5 L2.5 11.5" stroke="#111" stroke-width="3.4"/><path d="M3 3 L11 11 M11 3 L3 11" stroke="#fff" stroke-width="1.6"/></svg>
<div class="a t d" style="left:1313.00px;top:310.69px;font-size:11px;line-height:11px;color:#000;letter-spacing:0.017px;">Background:</div>
<div class="a " style="left:1398px;top:305px;width:173px;height:20px;background:linear-gradient(#9c9c9c,#b4b4b4);border:1px solid #191919;border-radius:4px 4px 4px 4px;"></div>
<svg class="a" style="left:1403px;top:307px;" width="17" height="17" viewBox="0 0 17 17"><circle cx="4.5" cy="3" r="1.8" fill="#e8f090"/><rect x="8.5" y="2" width="5" height="9" rx="2.5" fill="#8ab0e8" stroke="#112" stroke-width="0.9"/><circle cx="5.5" cy="11" r="3.3" fill="#f4f4f4" stroke="#111" stroke-width="1"/></svg>
<div class="a t d" style="left:1313.00px;top:335.69px;font-size:11px;line-height:11px;color:#000;letter-spacing:0.164px;">Active Clip:</div>
<div class="a " style="left:1398px;top:330px;width:173px;height:20px;background:linear-gradient(#9c9c9c,#b4b4b4);border:1px solid #191919;border-radius:4px 4px 4px 4px;"></div>
<svg class="a" style="left:1400px;top:331px;" width="16" height="16" viewBox="0 0 16 16"><rect x="1.5" y="5" width="11" height="9" fill="#f4f4f4" stroke="#111" stroke-width="1"/><path d="M1.5 8 H12.5 M5 5 V14 M9 5 V14" stroke="#111" stroke-width="0.8"/><rect x="4" y="1" width="8" height="4" fill="none" stroke="#111" stroke-width="0.9"/></svg>
<div class="a " style="left:1303px;top:357px;width:272px;height:1px;background:#5a5a5a;"></div>
<div class="a " style="left:1303px;top:358px;width:272px;height:1px;background:#828282;"></div>
<svg class="a" style="left:1311px;top:366px;" width="9" height="8" viewBox="0 0 9 8"><path d="M0 0.5 L8.5 0.5 L4.25 7.5Z" fill="#1e1e1e"/></svg>
<div class="a t d" style="left:1323.30px;top:364.69px;font-size:11px;line-height:11px;color:#000;letter-spacing:0.188px;">Units</div>
<svg class="a" style="left:1558px;top:369px;" width="11" height="4" viewBox="0 0 11 4"><rect x="0" y="0" width="1" height="1" fill="#e6e6e6"/><rect x="0" y="1" width="1" height="1" fill="#111"/><rect x="0" y="2" width="1" height="1" fill="#e6e6e6"/><rect x="0" y="3" width="1" height="1" fill="#111"/><rect x="3" y="0" width="1" height="1" fill="#e6e6e6"/><rect x="3" y="1" width="1" height="1" fill="#111"/><rect x="3" y="2" width="1" height="1" fill="#e6e6e6"/><rect x="3" y="3" width="1" height="1" fill="#111"/><rect x="6" y="0" width="1" height="1" fill="#e6e6e6"/><rect x="6" y="1" width="1" height="1" fill="#111"/><rect x="6" y="2" width="1" height="1" fill="#e6e6e6"/><rect x="6" y="3" width="1" height="1" fill="#111"/><rect x="9" y="0" width="1" height="1" fill="#e6e6e6"/><rect x="9" y="1" width="1" height="1" fill="#111"/><rect x="9" y="2" width="1" height="1" fill="#e6e6e6"/><rect x="9" y="3" width="1" height="1" fill="#111"/></svg>
<div class="a " style="left:1306px;top:390px;width:88px;height:20px;background:linear-gradient(#545454,#3a3a3a);border:1px solid #111;border-radius:4px 0px 0px 4px;"></div>
<div class="a " style="left:1393px;top:390px;width:89px;height:20px;background:linear-gradient(#6690d0,#4a74b6);border:1px solid #111;border-radius:0px 0px 0px 0px;"></div>
<div class="a " style="left:1481px;top:390px;width:91px;height:20px;background:linear-gradient(#545454,#3a3a3a);border:1px solid #111;border-radius:0px 4px 4px 0px;"></div>
<div class="a t" style="left:1336.50px;top:395.69px;font-size:11px;line-height:11px;color:#fff;letter-spacing:-0.078px;">None</div>
<div class="a t d" style="left:1421.00px;top:395.69px;font-size:11px;line-height:11px;color:#0a1540;letter-spacing:0.344px;">Metric</div>
<div class="a t" style="left:1505.00px;top:395.69px;font-size:11px;line-height:11px;color:#fff;letter-spacing:0.234px;">Imperial</div>
<div class="a " style="left:1306px;top:412px;width:132px;height:20px;background:linear-gradient(#6690d0,#4a74b6);border:1px solid #111;border-radius:4px 0px 0px 4px;"></div>
<div class="a " style="left:1437px;top:412px;width:135px;height:20px;background:linear-gradient(#545454,#3a3a3a);border:1px solid #111;border-radius:0px 4px 4px 0px;"></div>
<div class="a t d" style="left:1350.50px;top:417.69px;font-size:11px;line-height:11px;color:#0a1540;letter-spacing:0.058px;">Degrees</div>
<div class="a t" style="left:1484.50px;top:417.69px;font-size:11px;line-height:11px;color:#fff;letter-spacing:-0.196px;">Radians</div>
<div class="a " style="left:1307px;top:437px;width:127px;height:20px;background:linear-gradient(#a2a2a2,#b6b6b6);border:1px solid #191919;border-radius:9px 9px 9px 9px;"></div>
<svg class="a" style="left:1313px;top:443px;" width="5" height="8" viewBox="0 0 5 8"><path d="M4 0.5 L0.5 4 L4 7.5Z" fill="#8c8c8c"/></svg>
<svg class="a" style="left:1423px;top:443px;" width="5" height="8" viewBox="0 0 5 8"><path d="M1 0.5 L4.5 4 L1 7.5Z" fill="#8c8c8c"/></svg>
<div class="a t d" style="left:1321.40px;top:442.69px;font-size:11px;line-height:11px;color:#000;letter-spacing:-0.099px;">Scale:</div>
<div class="a t d" style="left:1387.20px;top:442.69px;font-size:11px;line-height:11px;color:#000;letter-spacing:0.487px;">1.000</div>
<div class="a " style="left:1445px;top:440px;width:14px;height:14px;background:linear-gradient(#4e4e4e,#3c3c3c);border:1px solid #222;border-radius:3px;"></div>
<div class="a t d" style="left:1467.00px;top:442.69px;font-size:11px;line-height:11px;color:#000;letter-spacing:0.013px;">Separate Units</div>
<div class="a " style="left:1303px;top:464px;width:272px;height:1px;background:#5a5a5a;"></div>
<div class="a " style="left:1303px;top:465px;width:272px;height:1px;background:#828282;"></div>
<svg class="a" style="left:1311px;top:473px;" width="9" height="8" viewBox="0 0 9 8"><path d="M0 0.5 L8.5 0.5 L4.25 7.5Z" fill="#1e1e1e"/></svg>
<div class="a t d" style="left:1323.30px;top:471.69px;font-size:11px;line-height:11px;color:#000;letter-spacing:-0.159px;">Keying Sets</div>
<svg class="a" style="left:1558px;top:476px;" width="11" height="4" viewBox="0 0 11 4"><rect x="0" y="0" width="1" height="1" fill="#e6e6e6"/><rect x="0" y="1" width="1" height="1" fill="#111"/><rect x="0" y="2" width="1" height="1" fill="#e6e6e6"/><rect x="0" y="3" width="1" height="1" fill="#111"/><rect x="3" y="0" width="1" height="1" fill="#e6e6e6"/><rect x="3" y="1" width="1" height="1" fill="#111"/><rect x="3" y="2" width="1" height="1" fill="#e6e6e6"/><rect x="3" y="3" width="1" height="1" fill="#111"/><rect x="6" y="0" width="1" height="1" fill="#e6e6e6"/><rect x="6" y="1" width="1" height="1" fill="#111"/><rect x="6" y="2" width="1" height="1" fill="#e6e6e6"/><rect x="6" y="3" width="1" height="1" fill="#111"/><rect x="9" y="0" width="1" height="1" fill="#e6e6e6"/><rect x="9" y="1" width="1" height="1" fill="#111"/><rect x="9" y="2" width="1" height="1" fill="#e6e6e6"/><rect x="9" y="3" width="1" height="1" fill="#111"/></svg>
<div class="a " style="left:1307px;top:497px;width:236px;height:43px;background:#7a7a7a;border:1px solid #5e5e5e;border-radius:5px;box-shadow:inset 0 1px 2px rgba(0,0,0,0.2);"></div>
<svg class="a" style="left:1316px;top:525px;" width="9" height="9" viewBox="0 0 9 9"><circle cx="4.5" cy="4.5" r="3.6" fill="none" stroke="#d8d8d8" stroke-width="1"/><path d="M2.5 4.5 H6.5 M4.5 2.5 V6.5" stroke="#d8d8d8" stroke-width="0.9"/></svg>
<div class="a " style="left:1427px;top:528px;width:14px;height:1px;background:#e8e8e8;"></div>
<div class="a " style="left:1427px;top:531px;width:14px;height:1px;background:#e8e8e8;"></div>
<div class="a " style="left:1552px;top:497px;width:19px;height:20px;background:linear-gradient(#a6a6a6,#929292);border:1px solid #222;border-radius:4px 4px 0px 0px;"></div>
<div class="a " style="left:1552px;top:516px;width:19px;height:21px;background:linear-gradient(#8e8e8e,#7e7e7e);border:1px solid #222;border-radius:0px 0px 4px 4px;"></div>
<svg class="a" style="left:1555px;top:500px;" width="13" height="13" viewBox="0 0 13 13"><path d="M6.5 1.5 V11.5 M1.5 6.5 H11.5" stroke="#111" stroke-width="3.6"/><path d="M6.5 2 V11 M2 6.5 H11" stroke="#fff" stroke-width="1.8"/></svg>
<div class="a " style="left:1557px;top:526px;width:10px;height:2px;background:#c8c8c8;"></div>
<div class="a " style="left:1303px;top:547px;width:272px;height:1px;background:#5a5a5a;"></div>
<div class="a " style="left:1303px;top:548px;width:272px;height:1px;background:#828282;"></div>
<svg class="a" style="left:1311px;top:556px;" width="8" height="9" viewBox="0 0 8 9"><path d="M0.5 0 L7.5 4.25 L0.5 8.5Z" fill="#1e1e1e"/></svg>
<div class="a t d" style="left:1323.30px;top:554.69px;font-size:11px;line-height:11px;color:#000;letter-spacing:0.775px;">Color Management</div>
<svg class="a" style="left:1558px;top:559px;" width="11" height="4" viewBox="0 0 11 4"><rect x="0" y="0" width="1" height="1" fill="#e6e6e6"/><rect x="0" y="1" width="1" height="1" fill="#111"/><rect x="0" y="2" width="1" height="1" fill="#e6e6e6"/><rect x="0" y="3" width="1" height="1" fill="#111"/><rect x="3" y="0" width="1" height="1" fill="#e6e6e6"/><rect x="3" y="1" width="1" height="1" fill="#111"/><rect x="3" y="2" width="1" height="1" fill="#e6e6e6"/><rect x="3" y="3" width="1" height="1" fill="#111"/><rect x="6" y="0" width="1" height="1" fill="#e6e6e6"/><rect x="6" y="1" width="1" height="1" fill="#111"/><rect x="6" y="2" width="1" height="1" fill="#e6e6e6"/><rect x="6" y="3" width="1" height="1" fill="#111"/><rect x="9" y="0" width="1" height="1" fill="#e6e6e6"/><rect x="9" y="1" width="1" height="1" fill="#111"/><rect x="9" y="2" width="1" height="1" fill="#e6e6e6"/><rect x="9" y="3" width="1" height="1" fill="#111"/></svg>
<div class="a " style="left:1303px;top:571px;width:272px;height:1px;background:#5a5a5a;"></div>
<div class="a " style="left:1303px;top:572px;width:272px;height:1px;background:#828282;"></div>
<svg class="a" style="left:1311px;top:580px;" width="8" height="9" viewBox="0 0 8 9"><path d="M0.5 0 L7.5 4.25 L0.5 8.5Z" fill="#1e1e1e"/></svg>
<div class="a t d" style="left:1323.30px;top:577.69px;font-size:11px;line-height:11px;color:#000;letter-spacing:0.769px;">Audio</div>
<svg class="a" style="left:1558px;top:583px;" width="11" height="4" viewBox="0 0 11 4"><rect x="0" y="0" width="1" height="1" fill="#e6e6e6"/><rect x="0" y="1" width="1" height="1" fill="#111"/><rect x="0" y="2" width="1" height="1" fill="#e6e6e6"/><rect x="0" y="3" width="1" height="1" fill="#111"/><rect x="3" y="0" width="1" height="1" fill="#e6e6e6"/><rect x="3" y="1" width="1" height="1" fill="#111"/><rect x="3" y="2" width="1" height="1" fill="#e6e6e6"/><rect x="3" y="3" width="1" height="1" fill="#111"/><rect x="6" y="0" width="1" height="1" fill="#e6e6e6"/><rect x="6" y="1" width="1" height="1" fill="#111"/><rect x="6" y="2" width="1" height="1" fill="#e6e6e6"/><rect x="6" y="3" width="1" height="1" fill="#111"/><rect x="9" y="0" width="1" height="1" fill="#e6e6e6"/><rect x="9" y="1" width="1" height="1" fill="#111"/><rect x="9" y="2" width="1" height="1" fill="#e6e6e6"/><rect x="9" y="3" width="1" height="1" fill="#111"/></svg>
<div class="a " style="left:1303px;top:595px;width:272px;height:1px;background:#5a5a5a;"></div>
<div class="a " style="left:1303px;top:596px;width:272px;height:1px;background:#828282;"></div>
<svg class="a" style="left:1311px;top:604px;" width="9" height="8" viewBox="0 0 9 8"><path d="M0 0.5 L8.5 0.5 L4.25 7.5Z" fill="#1e1e1e"/></svg>
<div class="a " style="left:1323px;top:601px;width:14px;height:14px;background:linear-gradient(#4e4e4e,#3c3c3c);border:1px solid #222;border-radius:3px;"></div>
<svg class="a" style="left:1323px;top:599px;" width="16" height="16" viewBox="0 0 16 16"><path d="M3.5 8.5 L6.5 11.5 L12 3.5" fill="none" stroke="#111" stroke-width="2.8" opacity="0.45"/><path d="M3.5 8 L6.5 11 L12 3" fill="none" stroke="#ececec" stroke-width="1.7"/></svg>
<div class="a t d" style="left:1343.00px;top:602.69px;font-size:11px;line-height:11px;color:#000;letter-spacing:0.737px;">Gravity</div>
<svg class="a" style="left:1558px;top:607px;" width="11" height="4" viewBox="0 0 11 4"><rect x="0" y="0" width="1" height="1" fill="#e6e6e6"/><rect x="0" y="1" width="1" height="1" fill="#111"/><rect x="0" y="2" width="1" height="1" fill="#e6e6e6"/><rect x="0" y="3" width="1" height="1" fill="#111"/><rect x="3" y="0" width="1" height="1" fill="#e6e6e6"/><rect x="3" y="1" width="1" height="1" fill="#111"/><rect x="3" y="2" width="1" height="1" fill="#e6e6e6"/><rect x="3" y="3" width="1" height="1" fill="#111"/><rect x="6" y="0" width="1" height="1" fill="#e6e6e6"/><rect x="6" y="1" width="1" height="1" fill="#111"/><rect x="6" y="2" width="1" height="1" fill="#e6e6e6"/><rect x="6" y="3" width="1" height="1" fill="#111"/><rect x="9" y="0" width="1" height="1" fill="#e6e6e6"/><rect x="9" y="1" width="1" height="1" fill="#111"/><rect x="9" y="2" width="1" height="1" fill="#e6e6e6"/><rect x="9" y="3" width="1" height="1" fill="#111"/></svg>
<div class="a " style="left:1307px;top:628px;width:87px;height:20px;background:linear-gradient(#a2a2a2,#b6b6b6);border:1px solid #191919;border-radius:9px 0px 0px 9px;"></div>
<div class="a " style="left:1393px;top:628px;width:89px;height:20px;background:linear-gradient(#a2a2a2,#b6b6b6);border:1px solid #191919;border-radius:0px 0px 0px 0px;"></div>
<div class="a " style="left:1481px;top:628px;width:90px;height:20px;background:linear-gradient(#a2a2a2,#b6b6b6);border:1px solid #191919;border-radius:0px 9px 9px 0px;"></div>
<svg class="a" style="left:1313px;top:634px;" width="5" height="8" viewBox="0 0 5 8"><path d="M4 0.5 L0.5 4 L4 7.5Z" fill="#8c8c8c"/></svg>
<svg class="a" style="left:1384px;top:634px;" width="5" height="8" viewBox="0 0 5 8"><path d="M1 0.5 L4.5 4 L1 7.5Z" fill="#8c8c8c"/></svg>
<svg class="a" style="left:1399px;top:634px;" width="5" height="8" viewBox="0 0 5 8"><path d="M4 0.5 L0.5 4 L4 7.5Z" fill="#8c8c8c"/></svg>
<svg class="a" style="left:1472px;top:634px;" width="5" height="8" viewBox="0 0 5 8"><path d="M1 0.5 L4.5 4 L1 7.5Z" fill="#8c8c8c"/></svg>
<svg class="a" style="left:1487px;top:634px;" width="5" height="8" viewBox="0 0 5 8"><path d="M4 0.5 L0.5 4 L4 7.5Z" fill="#8c8c8c"/></svg>
<svg class="a" style="left:1562px;top:634px;" width="5" height="8" viewBox="0 0 5 8"><path d="M1 0.5 L4.5 4 L1 7.5Z" fill="#8c8c8c"/></svg>
<div class="a t d" style="left:1321.40px;top:633.69px;font-size:11px;line-height:11px;color:#000;letter-spacing:0.297px;">X:</div>
<div class="a t d" style="left:1348.60px;top:633.69px;font-size:11px;line-height:11px;color:#000;letter-spacing:0.100px;">0m/s²</div>
<div class="a t d" style="left:1408.80px;top:633.69px;font-size:11px;line-height:11px;color:#000;letter-spacing:0.602px;">Y:</div>
<div class="a t d" style="left:1436.60px;top:633.69px;font-size:11px;line-height:11px;color:#000;letter-spacing:0.100px;">0m/s²</div>
<div class="a t d" style="left:1498.00px;top:633.69px;font-size:11px;line-height:11px;color:#000;">:</div>
<div class="a t d" style="left:1505.60px;top:633.69px;font-size:11px;line-height:11px;color:#000;letter-spacing:0.170px;">-9.81m/s²</div>
<div class="a " style="left:1303px;top:655px;width:272px;height:1px;background:#5a5a5a;"></div>
<div class="a " style="left:1303px;top:656px;width:272px;height:1px;background:#828282;"></div>
<svg class="a" style="left:1311px;top:664px;" width="9" height="8" viewBox="0 0 9 8"><path d="M0 0.5 L8.5 0.5 L4.25 7.5Z" fill="#1e1e1e"/></svg>
<div class="a t d" style="left:1323.30px;top:662.69px;font-size:11px;line-height:11px;color:#000;letter-spacing:0.638px;">Rigid Body World</div>
<svg class="a" style="left:1558px;top:667px;" width="11" height="4" viewBox="0 0 11 4"><rect x="0" y="0" width="1" height="1" fill="#e6e6e6"/><rect x="0" y="1" width="1" height="1" fill="#111"/><rect x="0" y="2" width="1" height="1" fill="#e6e6e6"/><rect x="0" y="3" width="1" height="1" fill="#111"/><rect x="3" y="0" width="1" height="1" fill="#e6e6e6"/><rect x="3" y="1" width="1" height="1" fill="#111"/><rect x="3" y="2" width="1" height="1" fill="#e6e6e6"/><rect x="3" y="3" width="1" height="1" fill="#111"/><rect x="6" y="0" width="1" height="1" fill="#e6e6e6"/><rect x="6" y="1" width="1" height="1" fill="#111"/><rect x="6" y="2" width="1" height="1" fill="#e6e6e6"/><rect x="6" y="3" width="1" height="1" fill="#111"/><rect x="9" y="0" width="1" height="1" fill="#e6e6e6"/><rect x="9" y="1" width="1" height="1" fill="#111"/><rect x="9" y="2" width="1" height="1" fill="#e6e6e6"/><rect x="9" y="3" width="1" height="1" fill="#111"/></svg>
<div class="a " style="left:1306px;top:689px;width:265px;height:20px;background:linear-gradient(#a6a6a6,#8b8b8b);border:1px solid #191919;border-radius:5px 5px 5px 5px;"></div>
<div class="a t d" style="left:1384.50px;top:693.69px;font-size:11px;line-height:11px;color:#000;letter-spacing:-0.023px;">Add Rigid Body World</div>
<div class="a " style="left:1303px;top:716px;width:272px;height:1px;background:#5a5a5a;"></div>
<div class="a " style="left:1303px;top:717px;width:272px;height:1px;background:#828282;"></div>
<svg class="a" style="left:1311px;top:725px;" width="9" height="8" viewBox="0 0 9 8"><path d="M0 0.5 L8.5 0.5 L4.25 7.5Z" fill="#1e1e1e"/></svg>
<div class="a " style="left:1323px;top:723px;width:14px;height:14px;background:linear-gradient(#4e4e4e,#3c3c3c);border:1px solid #222;border-radius:3px;"></div>
<div class="a t d" style="left:1343.20px;top:722.69px;font-size:11px;line-height:11px;color:#000;letter-spacing:0.812px;">Simplify</div>
<svg class="a" style="left:1558px;top:727px;" width="11" height="4" viewBox="0 0 11 4"><rect x="0" y="0" width="1" height="1" fill="#e6e6e6"/><rect x="0" y="1" width="1" height="1" fill="#111"/><rect x="0" y="2" width="1" height="1" fill="#e6e6e6"/><rect x="0" y="3" width="1" height="1" fill="#111"/><rect x="3" y="0" width="1" height="1" fill="#e6e6e6"/><rect x="3" y="1" width="1" height="1" fill="#111"/><rect x="3" y="2" width="1" height="1" fill="#e6e6e6"/><rect x="3" y="3" width="1" height="1" fill="#111"/><rect x="6" y="0" width="1" height="1" fill="#e6e6e6"/><rect x="6" y="1" width="1" height="1" fill="#111"/><rect x="6" y="2" width="1" height="1" fill="#e6e6e6"/><rect x="6" y="3" width="1" height="1" fill="#111"/><rect x="9" y="0" width="1" height="1" fill="#e6e6e6"/><rect x="9" y="1" width="1" height="1" fill="#111"/><rect x="9" y="2" width="1" height="1" fill="#e6e6e6"/><rect x="9" y="3" width="1" height="1" fill="#111"/></svg>
<div class="a t" style="left:1313.60px;top:753.69px;font-size:11px;line-height:11px;color:#555555;letter-spacing:0.148px;">Viewport:</div>
<div class="a t" style="left:1450.20px;top:753.69px;font-size:11px;line-height:11px;color:#555555;letter-spacing:-0.165px;">Render:</div>
<div class="a " style="left:1307px;top:771px;width:127px;height:19px;background:#787878;border:1px solid #5e5e5e;border-radius:9px;"></div>
<svg class="a" style="left:1313px;top:776.5px;" width="5" height="8" viewBox="0 0 5 8"><path d="M4 0.5 L0.5 4 L4 7.5Z" fill="#858585"/></svg>
<svg class="a" style="left:1423px;top:776.5px;" width="5" height="8" viewBox="0 0 5 8"><path d="M1 0.5 L4.5 4 L1 7.5Z" fill="#858585"/></svg>
<div class="a " style="left:1443px;top:771px;width:128px;height:19px;background:#787878;border:1px solid #5e5e5e;border-radius:9px;"></div>
<svg class="a" style="left:1449px;top:776.5px;" width="5" height="8" viewBox="0 0 5 8"><path d="M4 0.5 L0.5 4 L4 7.5Z" fill="#858585"/></svg>
<svg class="a" style="left:1560px;top:776.5px;" width="5" height="8" viewBox="0 0 5 8"><path d="M1 0.5 L4.5 4 L1 7.5Z" fill="#858585"/></svg>
<div class="a t" style="left:1321.00px;top:775.69px;font-size:11px;line-height:11px;color:#555555;letter-spacing:0.055px;">Subdivision:</div>
<div class="a t" style="left:1410.88px;top:775.69px;font-size:11px;line-height:11px;color:#555555;">6</div>
<div class="a t" style="left:1458.00px;top:775.69px;font-size:11px;line-height:11px;color:#555555;letter-spacing:0.055px;">Subdivision:</div>
<div class="a t" style="left:1548.88px;top:775.69px;font-size:11px;line-height:11px;color:#555555;">6</div>
<div class="a " style="left:1307px;top:793px;width:127px;height:19px;background:#787878;border:1px solid #5e5e5e;border-radius:9px;"></div>
<div class="a " style="left:1443px;top:793px;width:128px;height:19px;background:#787878;border:1px solid #5e5e5e;border-radius:9px;"></div>
<div class="a t" style="left:1320.50px;top:797.69px;font-size:11px;line-height:11px;color:#555555;letter-spacing:0.122px;">Child Particl:  1.000</div>
<div class="a t" style="left:1457.50px;top:797.69px;font-size:11px;line-height:11px;color:#555555;letter-spacing:0.122px;">Child Particl:  1.000</div>
<div class="a " style="left:1443px;top:815px;width:128px;height:19px;background:#787878;border:1px solid #5e5e5e;border-radius:9px;"></div>
<svg class="a" style="left:1449px;top:820.5px;" width="5" height="8" viewBox="0 0 5 8"><path d="M4 0.5 L0.5 4 L4 7.5Z" fill="#858585"/></svg>
<svg class="a" style="left:1560px;top:820.5px;" width="5" height="8" viewBox="0 0 5 8"><path d="M1 0.5 L4.5 4 L1 7.5Z" fill="#858585"/></svg>
<div class="a t" style="left:1458.00px;top:819.69px;font-size:11px;line-height:11px;color:#555555;letter-spacing:0.158px;">Shadow Sample:16</div>
<div class="a " style="left:1443px;top:837px;width:128px;height:19px;background:#787878;border:1px solid #5e5e5e;border-radius:9px;"></div>
<svg class="a" style="left:1449px;top:842.5px;" width="5" height="8" viewBox="0 0 5 8"><path d="M4 0.5 L0.5 4 L4 7.5Z" fill="#858585"/></svg>
<svg class="a" style="left:1560px;top:842.5px;" width="5" height="8" viewBox="0 0 5 8"><path d="M1 0.5 L4.5 4 L1 7.5Z" fill="#858585"/></svg>
<div class="a t" style="left:1458.00px;top:841.69px;font-size:11px;line-height:11px;color:#555555;letter-spacing:-0.066px;">AO and SSS:  1.000</div>
<svg class="a" style="left:1298px;top:835px;" width="13" height="13" viewBox="0 0 13 13"><path d="M0 1 L12 13 M0 5 L8 13 M0 9 L4 13" stroke="#1e1e1e" stroke-width="1.1"/><path d="M0 2.3 L10.7 13 M0 6.3 L6.7 13 M0 10.3 L2.7 13" stroke="#a8a8a8" stroke-width="0.8"/></svg>
<svg class="a" style="left:1050px;top:150px;" width="260" height="150" viewBox="0 0 260 150"><path d="M137 24 L236 21.5 Q238.5 21.5 238.5 24 L236.5 123.5 L19 133 L32 22 L57 22.69999999999999" fill="none" stroke="#f4e200" stroke-width="5.6" stroke-linecap="round" stroke-linejoin="round"/></svg>
<svg class="a" style="left:1160px;top:185px;" width="45" height="55" viewBox="0 0 45 55"><path d="M12 10.699999999999989 L35.5 10.099999999999994 M14 26.5 L35 29.30000000000001 M9.5 45.80000000000001 L36.5 48.80000000000001" fill="none" stroke="#f4e200" stroke-width="5.6" stroke-linecap="round"/></svg>
</body></html>
